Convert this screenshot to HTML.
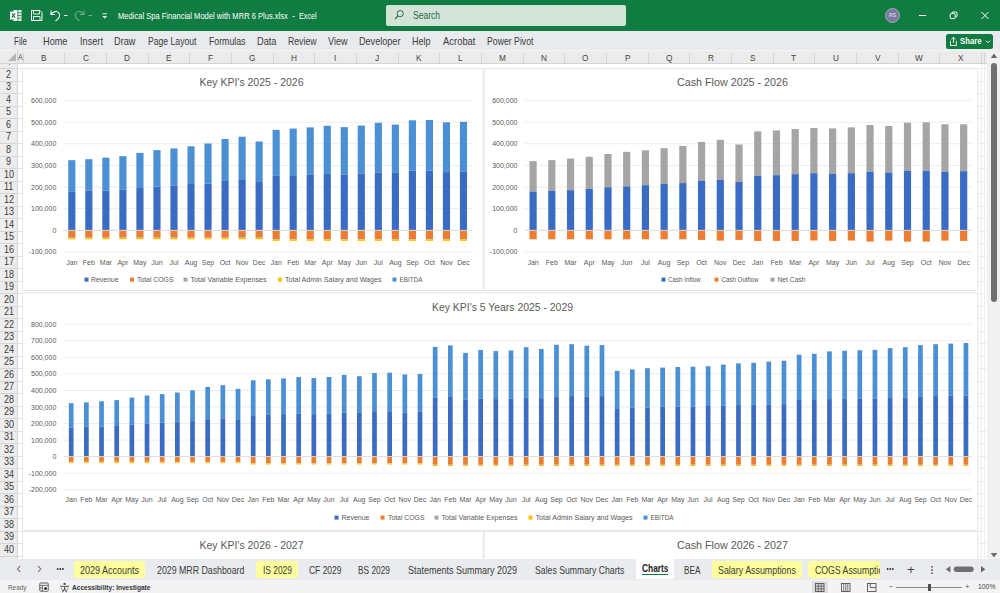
<!DOCTYPE html>
<html><head><meta charset="utf-8"><title>Excel</title>
<style>
html,body{margin:0;padding:0;}
body{width:1000px;height:593px;position:relative;overflow:hidden;background:#fff;font-family:"Liberation Sans",sans-serif;}
.b{position:absolute;display:block;}
.t{position:absolute;white-space:nowrap;line-height:1.16;transform-origin:0 50%;}
</style></head><body>
<div class="b" style="left:0px;top:0px;width:1000px;height:30.7px;background:#107c41;"></div>
<div class="b" style="left:385.5px;top:5px;width:240px;height:20.5px;background:#d2e3d8;border-radius:2px;"></div>
<span class="t" style="left:412.5px;top:9.9px;font-size:10.4px;color:#2b6a47;transform:scaleX(0.819);">Search</span>
<span class="t" style="left:117.5px;top:11.0px;font-size:8.8px;color:#fff;transform:scaleX(0.860);">Medical Spa Financial Model with MRR 6 Plus.xlsx</span>
<span class="t" style="left:291.5px;top:11.0px;font-size:8.8px;color:#fff;transform:scaleX(1.024);">-</span>
<span class="t" style="left:299.3px;top:11.0px;font-size:8.8px;color:#fff;transform:scaleX(0.823);">Excel</span>
<div class="b" style="left:884.5px;top:7.5px;width:15px;height:15px;border-radius:50%;background:#7d77a5;border:1px solid #8fb5a3;box-sizing:border-box"></div>
<span class="t" style="left:888.5px;top:12.2px;font-size:5.2px;color:#e9e6f2;transform:scaleX(0.969);">RS</span>
<div class="b" style="left:0px;top:30.7px;width:1000px;height:19.3px;background:#e8eaed;"></div>
<span class="t" style="left:14.0px;top:35.7px;font-size:10.4px;color:#3b3b3b;transform:scaleX(0.776);">File</span>
<span class="t" style="left:43.0px;top:35.7px;font-size:10.4px;color:#3b3b3b;transform:scaleX(0.883);">Home</span>
<span class="t" style="left:80.0px;top:35.7px;font-size:10.4px;color:#3b3b3b;transform:scaleX(0.884);">Insert</span>
<span class="t" style="left:114.0px;top:35.7px;font-size:10.4px;color:#3b3b3b;transform:scaleX(0.886);">Draw</span>
<span class="t" style="left:148.0px;top:35.7px;font-size:10.4px;color:#3b3b3b;transform:scaleX(0.830);">Page Layout</span>
<span class="t" style="left:209.0px;top:35.7px;font-size:10.4px;color:#3b3b3b;transform:scaleX(0.842);">Formulas</span>
<span class="t" style="left:257.0px;top:35.7px;font-size:10.4px;color:#3b3b3b;transform:scaleX(0.888);">Data</span>
<span class="t" style="left:288.0px;top:35.7px;font-size:10.4px;color:#3b3b3b;transform:scaleX(0.836);">Review</span>
<span class="t" style="left:328.0px;top:35.7px;font-size:10.4px;color:#3b3b3b;transform:scaleX(0.872);">View</span>
<span class="t" style="left:359.0px;top:35.7px;font-size:10.4px;color:#3b3b3b;transform:scaleX(0.875);">Developer</span>
<span class="t" style="left:412.0px;top:35.7px;font-size:10.4px;color:#3b3b3b;transform:scaleX(0.865);">Help</span>
<span class="t" style="left:443.0px;top:35.7px;font-size:10.4px;color:#3b3b3b;transform:scaleX(0.907);">Acrobat</span>
<span class="t" style="left:487.0px;top:35.7px;font-size:10.4px;color:#3b3b3b;transform:scaleX(0.838);">Power Pivot</span>
<div class="b" style="left:946px;top:33.5px;width:46.5px;height:15px;background:#107c41;border-radius:2.5px;"></div>
<span class="t" style="left:960.3px;top:36.1px;font-size:9.0px;color:#fff;font-weight:bold;transform:scaleX(0.860);">Share</span>
<div class="b" style="left:0px;top:50px;width:1000px;height:13.5px;background:#ebebeb;"></div>
<div class="b" style="left:0px;top:49.6px;width:1000px;height:0.9px;background:#f4f4f4;"></div>
<div class="b" style="left:0px;top:63px;width:987px;height:0.9px;background:#d4d4d4;"></div>
<div class="b" style="left:17.3px;top:50px;width:0.8px;height:14px;background:#d4d4d4;"></div>
<div class="b" style="left:22.6px;top:53px;width:0.8px;height:10px;background:#d6d6d6;"></div>
<span class="t" style="left:18.3px;top:51.4px;font-size:9.6px;color:#444;transform:scaleX(0.734);">A</span>
<span class="t" style="left:41.1px;top:51.5px;font-size:9.6px;color:#444;transform:scaleX(0.860);">B</span>
<div class="b" style="left:64.3px;top:53px;width:0.8px;height:10px;background:#d6d6d6;"></div>
<span class="t" style="left:82.5px;top:51.5px;font-size:9.6px;color:#444;transform:scaleX(0.860);">C</span>
<div class="b" style="left:105.89999999999999px;top:53px;width:0.8px;height:10px;background:#d6d6d6;"></div>
<span class="t" style="left:124.2px;top:51.5px;font-size:9.6px;color:#444;transform:scaleX(0.860);">D</span>
<div class="b" style="left:147.6px;top:53px;width:0.8px;height:10px;background:#d6d6d6;"></div>
<span class="t" style="left:166.1px;top:51.5px;font-size:9.6px;color:#444;transform:scaleX(0.860);">E</span>
<div class="b" style="left:189.29999999999998px;top:53px;width:0.8px;height:10px;background:#d6d6d6;"></div>
<span class="t" style="left:208.0px;top:51.5px;font-size:9.6px;color:#444;transform:scaleX(0.860);">F</span>
<div class="b" style="left:231.0px;top:53px;width:0.8px;height:10px;background:#d6d6d6;"></div>
<span class="t" style="left:249.0px;top:51.5px;font-size:9.6px;color:#444;transform:scaleX(0.860);">G</span>
<div class="b" style="left:272.6px;top:53px;width:0.8px;height:10px;background:#d6d6d6;"></div>
<span class="t" style="left:290.9px;top:51.5px;font-size:9.6px;color:#444;transform:scaleX(0.860);">H</span>
<div class="b" style="left:314.3px;top:53px;width:0.8px;height:10px;background:#d6d6d6;"></div>
<span class="t" style="left:334.4px;top:51.5px;font-size:9.6px;color:#444;transform:scaleX(0.860);">I</span>
<div class="b" style="left:356.0px;top:53px;width:0.8px;height:10px;background:#d6d6d6;"></div>
<span class="t" style="left:375.1px;top:51.5px;font-size:9.6px;color:#444;transform:scaleX(0.860);">J</span>
<div class="b" style="left:397.6px;top:53px;width:0.8px;height:10px;background:#d6d6d6;"></div>
<span class="t" style="left:416.1px;top:51.5px;font-size:9.6px;color:#444;transform:scaleX(0.860);">K</span>
<div class="b" style="left:439.3px;top:53px;width:0.8px;height:10px;background:#d6d6d6;"></div>
<span class="t" style="left:458.2px;top:51.5px;font-size:9.6px;color:#444;transform:scaleX(0.860);">L</span>
<div class="b" style="left:481.0px;top:53px;width:0.8px;height:10px;background:#d6d6d6;"></div>
<span class="t" style="left:498.8px;top:51.5px;font-size:9.6px;color:#444;transform:scaleX(0.860);">M</span>
<div class="b" style="left:522.6px;top:53px;width:0.8px;height:10px;background:#d6d6d6;"></div>
<span class="t" style="left:540.9px;top:51.5px;font-size:9.6px;color:#444;transform:scaleX(0.860);">N</span>
<div class="b" style="left:564.3000000000001px;top:53px;width:0.8px;height:10px;background:#d6d6d6;"></div>
<span class="t" style="left:582.3px;top:51.5px;font-size:9.6px;color:#444;transform:scaleX(0.860);">O</span>
<div class="b" style="left:606.0px;top:53px;width:0.8px;height:10px;background:#d6d6d6;"></div>
<span class="t" style="left:624.5px;top:51.5px;font-size:9.6px;color:#444;transform:scaleX(0.860);">P</span>
<div class="b" style="left:647.7px;top:53px;width:0.8px;height:10px;background:#d6d6d6;"></div>
<span class="t" style="left:665.7px;top:51.5px;font-size:9.6px;color:#444;transform:scaleX(0.860);">Q</span>
<div class="b" style="left:689.3000000000001px;top:53px;width:0.8px;height:10px;background:#d6d6d6;"></div>
<span class="t" style="left:707.6px;top:51.5px;font-size:9.6px;color:#444;transform:scaleX(0.860);">R</span>
<div class="b" style="left:731.0px;top:53px;width:0.8px;height:10px;background:#d6d6d6;"></div>
<span class="t" style="left:749.5px;top:51.5px;font-size:9.6px;color:#444;transform:scaleX(0.860);">S</span>
<div class="b" style="left:772.7px;top:53px;width:0.8px;height:10px;background:#d6d6d6;"></div>
<span class="t" style="left:791.4px;top:51.5px;font-size:9.6px;color:#444;transform:scaleX(0.860);">T</span>
<div class="b" style="left:814.3000000000001px;top:53px;width:0.8px;height:10px;background:#d6d6d6;"></div>
<span class="t" style="left:832.6px;top:51.5px;font-size:9.6px;color:#444;transform:scaleX(0.860);">U</span>
<div class="b" style="left:856.0px;top:53px;width:0.8px;height:10px;background:#d6d6d6;"></div>
<span class="t" style="left:874.5px;top:51.5px;font-size:9.6px;color:#444;transform:scaleX(0.860);">V</span>
<div class="b" style="left:897.7px;top:53px;width:0.8px;height:10px;background:#d6d6d6;"></div>
<span class="t" style="left:915.0px;top:51.5px;font-size:9.6px;color:#444;transform:scaleX(0.860);">W</span>
<div class="b" style="left:939.3000000000001px;top:53px;width:0.8px;height:10px;background:#d6d6d6;"></div>
<span class="t" style="left:957.8px;top:51.5px;font-size:9.6px;color:#444;transform:scaleX(0.860);">X</span>
<div class="b" style="left:981.0px;top:53px;width:0.8px;height:10px;background:#d6d6d6;"></div>
<div class="b" style="left:984.2px;top:53px;width:0.8px;height:10px;background:#d6d6d6;"></div>
<svg class="b" style="left:7px;top:53px" width="10" height="9"><path d="M9 0 L9 8 L1 8 Z" fill="#b5b5b5"/></svg>
<div class="b" style="left:0px;top:64px;width:987px;height:495px;background:#fff;"></div>
<div class="b" style="left:0px;top:64px;width:17.5px;height:495px;background:#ededed;"></div>
<div class="b" style="left:17.3px;top:64px;width:0.8px;height:495px;background:#d4d4d4;"></div>
<div class="b" style="left:8.7px;top:64px;width:1.2px;height:1.2px;background:#8a8a8a;"></div>
<div class="b" style="left:0px;top:68.0px;width:17.5px;height:0.8px;background:#d6d6d6;"></div>
<span class="t" style="left:6.4px;top:68.8px;font-size:10.3px;color:#3c3c3c;transform:scaleX(0.880);">2</span>
<div class="b" style="left:0px;top:80.5px;width:17.5px;height:0.8px;background:#d6d6d6;"></div>
<span class="t" style="left:6.4px;top:81.3px;font-size:10.3px;color:#3c3c3c;transform:scaleX(0.880);">3</span>
<div class="b" style="left:0px;top:93.0px;width:17.5px;height:0.8px;background:#d6d6d6;"></div>
<span class="t" style="left:6.4px;top:93.8px;font-size:10.3px;color:#3c3c3c;transform:scaleX(0.880);">4</span>
<div class="b" style="left:0px;top:105.5px;width:17.5px;height:0.8px;background:#d6d6d6;"></div>
<span class="t" style="left:6.4px;top:106.3px;font-size:10.3px;color:#3c3c3c;transform:scaleX(0.880);">5</span>
<div class="b" style="left:0px;top:118.0px;width:17.5px;height:0.8px;background:#d6d6d6;"></div>
<span class="t" style="left:6.4px;top:118.8px;font-size:10.3px;color:#3c3c3c;transform:scaleX(0.880);">6</span>
<div class="b" style="left:0px;top:130.5px;width:17.5px;height:0.8px;background:#d6d6d6;"></div>
<span class="t" style="left:6.4px;top:131.3px;font-size:10.3px;color:#3c3c3c;transform:scaleX(0.880);">7</span>
<div class="b" style="left:0px;top:143.0px;width:17.5px;height:0.8px;background:#d6d6d6;"></div>
<span class="t" style="left:6.4px;top:143.8px;font-size:10.3px;color:#3c3c3c;transform:scaleX(0.880);">8</span>
<div class="b" style="left:0px;top:155.5px;width:17.5px;height:0.8px;background:#d6d6d6;"></div>
<span class="t" style="left:6.4px;top:156.3px;font-size:10.3px;color:#3c3c3c;transform:scaleX(0.880);">9</span>
<div class="b" style="left:0px;top:168.0px;width:17.5px;height:0.8px;background:#d6d6d6;"></div>
<span class="t" style="left:3.9px;top:168.8px;font-size:10.3px;color:#3c3c3c;transform:scaleX(0.880);">10</span>
<div class="b" style="left:0px;top:180.5px;width:17.5px;height:0.8px;background:#d6d6d6;"></div>
<span class="t" style="left:4.2px;top:181.3px;font-size:10.3px;color:#3c3c3c;transform:scaleX(0.880);">11</span>
<div class="b" style="left:0px;top:193.0px;width:17.5px;height:0.8px;background:#d6d6d6;"></div>
<span class="t" style="left:3.9px;top:193.8px;font-size:10.3px;color:#3c3c3c;transform:scaleX(0.880);">12</span>
<div class="b" style="left:0px;top:205.5px;width:17.5px;height:0.8px;background:#d6d6d6;"></div>
<span class="t" style="left:3.9px;top:206.3px;font-size:10.3px;color:#3c3c3c;transform:scaleX(0.880);">13</span>
<div class="b" style="left:0px;top:218.0px;width:17.5px;height:0.8px;background:#d6d6d6;"></div>
<span class="t" style="left:3.9px;top:218.8px;font-size:10.3px;color:#3c3c3c;transform:scaleX(0.880);">14</span>
<div class="b" style="left:0px;top:230.5px;width:17.5px;height:0.8px;background:#d6d6d6;"></div>
<span class="t" style="left:3.9px;top:231.3px;font-size:10.3px;color:#3c3c3c;transform:scaleX(0.880);">15</span>
<div class="b" style="left:0px;top:243.0px;width:17.5px;height:0.8px;background:#d6d6d6;"></div>
<span class="t" style="left:3.9px;top:243.8px;font-size:10.3px;color:#3c3c3c;transform:scaleX(0.880);">16</span>
<div class="b" style="left:0px;top:255.5px;width:17.5px;height:0.8px;background:#d6d6d6;"></div>
<span class="t" style="left:3.9px;top:256.3px;font-size:10.3px;color:#3c3c3c;transform:scaleX(0.880);">17</span>
<div class="b" style="left:0px;top:268.0px;width:17.5px;height:0.8px;background:#d6d6d6;"></div>
<span class="t" style="left:3.9px;top:268.8px;font-size:10.3px;color:#3c3c3c;transform:scaleX(0.880);">18</span>
<div class="b" style="left:0px;top:280.5px;width:17.5px;height:0.8px;background:#d6d6d6;"></div>
<span class="t" style="left:3.9px;top:281.3px;font-size:10.3px;color:#3c3c3c;transform:scaleX(0.880);">19</span>
<div class="b" style="left:0px;top:293.0px;width:17.5px;height:0.8px;background:#d6d6d6;"></div>
<span class="t" style="left:3.9px;top:293.8px;font-size:10.3px;color:#3c3c3c;transform:scaleX(0.880);">20</span>
<div class="b" style="left:0px;top:305.5px;width:17.5px;height:0.8px;background:#d6d6d6;"></div>
<span class="t" style="left:3.9px;top:306.3px;font-size:10.3px;color:#3c3c3c;transform:scaleX(0.880);">21</span>
<div class="b" style="left:0px;top:318.0px;width:17.5px;height:0.8px;background:#d6d6d6;"></div>
<span class="t" style="left:3.9px;top:318.8px;font-size:10.3px;color:#3c3c3c;transform:scaleX(0.880);">22</span>
<div class="b" style="left:0px;top:330.5px;width:17.5px;height:0.8px;background:#d6d6d6;"></div>
<span class="t" style="left:3.9px;top:331.3px;font-size:10.3px;color:#3c3c3c;transform:scaleX(0.880);">23</span>
<div class="b" style="left:0px;top:343.0px;width:17.5px;height:0.8px;background:#d6d6d6;"></div>
<span class="t" style="left:3.9px;top:343.8px;font-size:10.3px;color:#3c3c3c;transform:scaleX(0.880);">24</span>
<div class="b" style="left:0px;top:355.5px;width:17.5px;height:0.8px;background:#d6d6d6;"></div>
<span class="t" style="left:3.9px;top:356.3px;font-size:10.3px;color:#3c3c3c;transform:scaleX(0.880);">25</span>
<div class="b" style="left:0px;top:368.0px;width:17.5px;height:0.8px;background:#d6d6d6;"></div>
<span class="t" style="left:3.9px;top:368.8px;font-size:10.3px;color:#3c3c3c;transform:scaleX(0.880);">26</span>
<div class="b" style="left:0px;top:380.5px;width:17.5px;height:0.8px;background:#d6d6d6;"></div>
<span class="t" style="left:3.9px;top:381.3px;font-size:10.3px;color:#3c3c3c;transform:scaleX(0.880);">27</span>
<div class="b" style="left:0px;top:393.0px;width:17.5px;height:0.8px;background:#d6d6d6;"></div>
<span class="t" style="left:3.9px;top:393.8px;font-size:10.3px;color:#3c3c3c;transform:scaleX(0.880);">28</span>
<div class="b" style="left:0px;top:405.5px;width:17.5px;height:0.8px;background:#d6d6d6;"></div>
<span class="t" style="left:3.9px;top:406.3px;font-size:10.3px;color:#3c3c3c;transform:scaleX(0.880);">29</span>
<div class="b" style="left:0px;top:418.0px;width:17.5px;height:0.8px;background:#d6d6d6;"></div>
<span class="t" style="left:3.9px;top:418.8px;font-size:10.3px;color:#3c3c3c;transform:scaleX(0.880);">30</span>
<div class="b" style="left:0px;top:430.5px;width:17.5px;height:0.8px;background:#d6d6d6;"></div>
<span class="t" style="left:3.9px;top:431.3px;font-size:10.3px;color:#3c3c3c;transform:scaleX(0.880);">31</span>
<div class="b" style="left:0px;top:443.0px;width:17.5px;height:0.8px;background:#d6d6d6;"></div>
<span class="t" style="left:3.9px;top:443.8px;font-size:10.3px;color:#3c3c3c;transform:scaleX(0.880);">32</span>
<div class="b" style="left:0px;top:455.5px;width:17.5px;height:0.8px;background:#d6d6d6;"></div>
<span class="t" style="left:3.9px;top:456.3px;font-size:10.3px;color:#3c3c3c;transform:scaleX(0.880);">33</span>
<div class="b" style="left:0px;top:468.0px;width:17.5px;height:0.8px;background:#d6d6d6;"></div>
<span class="t" style="left:3.9px;top:468.8px;font-size:10.3px;color:#3c3c3c;transform:scaleX(0.880);">34</span>
<div class="b" style="left:0px;top:480.5px;width:17.5px;height:0.8px;background:#d6d6d6;"></div>
<span class="t" style="left:3.9px;top:481.3px;font-size:10.3px;color:#3c3c3c;transform:scaleX(0.880);">35</span>
<div class="b" style="left:0px;top:493.0px;width:17.5px;height:0.8px;background:#d6d6d6;"></div>
<span class="t" style="left:3.9px;top:493.8px;font-size:10.3px;color:#3c3c3c;transform:scaleX(0.880);">36</span>
<div class="b" style="left:0px;top:505.5px;width:17.5px;height:0.8px;background:#d6d6d6;"></div>
<span class="t" style="left:3.9px;top:506.3px;font-size:10.3px;color:#3c3c3c;transform:scaleX(0.880);">37</span>
<div class="b" style="left:0px;top:518.0px;width:17.5px;height:0.8px;background:#d6d6d6;"></div>
<span class="t" style="left:3.9px;top:518.8px;font-size:10.3px;color:#3c3c3c;transform:scaleX(0.880);">38</span>
<div class="b" style="left:0px;top:530.5px;width:17.5px;height:0.8px;background:#d6d6d6;"></div>
<span class="t" style="left:3.9px;top:531.3px;font-size:10.3px;color:#3c3c3c;transform:scaleX(0.880);">39</span>
<div class="b" style="left:0px;top:543.0px;width:17.5px;height:0.8px;background:#d6d6d6;"></div>
<span class="t" style="left:3.9px;top:543.8px;font-size:10.3px;color:#3c3c3c;transform:scaleX(0.880);">40</span>
<div class="b" style="left:0px;top:555.5px;width:17.5px;height:0.8px;background:#d6d6d6;"></div>
<div class="b" style="left:18px;top:68.0px;width:5px;height:0.7px;background:#e4e4e4;"></div>
<div class="b" style="left:978.5px;top:68.0px;width:8.5px;height:0.7px;background:#eeeeee;"></div>
<div class="b" style="left:18px;top:80.5px;width:5px;height:0.7px;background:#e4e4e4;"></div>
<div class="b" style="left:978.5px;top:80.5px;width:8.5px;height:0.7px;background:#eeeeee;"></div>
<div class="b" style="left:18px;top:93.0px;width:5px;height:0.7px;background:#e4e4e4;"></div>
<div class="b" style="left:978.5px;top:93.0px;width:8.5px;height:0.7px;background:#eeeeee;"></div>
<div class="b" style="left:18px;top:105.5px;width:5px;height:0.7px;background:#e4e4e4;"></div>
<div class="b" style="left:978.5px;top:105.5px;width:8.5px;height:0.7px;background:#eeeeee;"></div>
<div class="b" style="left:18px;top:118.0px;width:5px;height:0.7px;background:#e4e4e4;"></div>
<div class="b" style="left:978.5px;top:118.0px;width:8.5px;height:0.7px;background:#eeeeee;"></div>
<div class="b" style="left:18px;top:130.5px;width:5px;height:0.7px;background:#e4e4e4;"></div>
<div class="b" style="left:978.5px;top:130.5px;width:8.5px;height:0.7px;background:#eeeeee;"></div>
<div class="b" style="left:18px;top:143.0px;width:5px;height:0.7px;background:#e4e4e4;"></div>
<div class="b" style="left:978.5px;top:143.0px;width:8.5px;height:0.7px;background:#eeeeee;"></div>
<div class="b" style="left:18px;top:155.5px;width:5px;height:0.7px;background:#e4e4e4;"></div>
<div class="b" style="left:978.5px;top:155.5px;width:8.5px;height:0.7px;background:#eeeeee;"></div>
<div class="b" style="left:18px;top:168.0px;width:5px;height:0.7px;background:#e4e4e4;"></div>
<div class="b" style="left:978.5px;top:168.0px;width:8.5px;height:0.7px;background:#eeeeee;"></div>
<div class="b" style="left:18px;top:180.5px;width:5px;height:0.7px;background:#e4e4e4;"></div>
<div class="b" style="left:978.5px;top:180.5px;width:8.5px;height:0.7px;background:#eeeeee;"></div>
<div class="b" style="left:18px;top:193.0px;width:5px;height:0.7px;background:#e4e4e4;"></div>
<div class="b" style="left:978.5px;top:193.0px;width:8.5px;height:0.7px;background:#eeeeee;"></div>
<div class="b" style="left:18px;top:205.5px;width:5px;height:0.7px;background:#e4e4e4;"></div>
<div class="b" style="left:978.5px;top:205.5px;width:8.5px;height:0.7px;background:#eeeeee;"></div>
<div class="b" style="left:18px;top:218.0px;width:5px;height:0.7px;background:#e4e4e4;"></div>
<div class="b" style="left:978.5px;top:218.0px;width:8.5px;height:0.7px;background:#eeeeee;"></div>
<div class="b" style="left:18px;top:230.5px;width:5px;height:0.7px;background:#e4e4e4;"></div>
<div class="b" style="left:978.5px;top:230.5px;width:8.5px;height:0.7px;background:#eeeeee;"></div>
<div class="b" style="left:18px;top:243.0px;width:5px;height:0.7px;background:#e4e4e4;"></div>
<div class="b" style="left:978.5px;top:243.0px;width:8.5px;height:0.7px;background:#eeeeee;"></div>
<div class="b" style="left:18px;top:255.5px;width:5px;height:0.7px;background:#e4e4e4;"></div>
<div class="b" style="left:978.5px;top:255.5px;width:8.5px;height:0.7px;background:#eeeeee;"></div>
<div class="b" style="left:18px;top:268.0px;width:5px;height:0.7px;background:#e4e4e4;"></div>
<div class="b" style="left:978.5px;top:268.0px;width:8.5px;height:0.7px;background:#eeeeee;"></div>
<div class="b" style="left:18px;top:280.5px;width:5px;height:0.7px;background:#e4e4e4;"></div>
<div class="b" style="left:978.5px;top:280.5px;width:8.5px;height:0.7px;background:#eeeeee;"></div>
<div class="b" style="left:18px;top:293.0px;width:5px;height:0.7px;background:#e4e4e4;"></div>
<div class="b" style="left:978.5px;top:293.0px;width:8.5px;height:0.7px;background:#eeeeee;"></div>
<div class="b" style="left:18px;top:305.5px;width:5px;height:0.7px;background:#e4e4e4;"></div>
<div class="b" style="left:978.5px;top:305.5px;width:8.5px;height:0.7px;background:#eeeeee;"></div>
<div class="b" style="left:18px;top:318.0px;width:5px;height:0.7px;background:#e4e4e4;"></div>
<div class="b" style="left:978.5px;top:318.0px;width:8.5px;height:0.7px;background:#eeeeee;"></div>
<div class="b" style="left:18px;top:330.5px;width:5px;height:0.7px;background:#e4e4e4;"></div>
<div class="b" style="left:978.5px;top:330.5px;width:8.5px;height:0.7px;background:#eeeeee;"></div>
<div class="b" style="left:18px;top:343.0px;width:5px;height:0.7px;background:#e4e4e4;"></div>
<div class="b" style="left:978.5px;top:343.0px;width:8.5px;height:0.7px;background:#eeeeee;"></div>
<div class="b" style="left:18px;top:355.5px;width:5px;height:0.7px;background:#e4e4e4;"></div>
<div class="b" style="left:978.5px;top:355.5px;width:8.5px;height:0.7px;background:#eeeeee;"></div>
<div class="b" style="left:18px;top:368.0px;width:5px;height:0.7px;background:#e4e4e4;"></div>
<div class="b" style="left:978.5px;top:368.0px;width:8.5px;height:0.7px;background:#eeeeee;"></div>
<div class="b" style="left:18px;top:380.5px;width:5px;height:0.7px;background:#e4e4e4;"></div>
<div class="b" style="left:978.5px;top:380.5px;width:8.5px;height:0.7px;background:#eeeeee;"></div>
<div class="b" style="left:18px;top:393.0px;width:5px;height:0.7px;background:#e4e4e4;"></div>
<div class="b" style="left:978.5px;top:393.0px;width:8.5px;height:0.7px;background:#eeeeee;"></div>
<div class="b" style="left:18px;top:405.5px;width:5px;height:0.7px;background:#e4e4e4;"></div>
<div class="b" style="left:978.5px;top:405.5px;width:8.5px;height:0.7px;background:#eeeeee;"></div>
<div class="b" style="left:18px;top:418.0px;width:5px;height:0.7px;background:#e4e4e4;"></div>
<div class="b" style="left:978.5px;top:418.0px;width:8.5px;height:0.7px;background:#eeeeee;"></div>
<div class="b" style="left:18px;top:430.5px;width:5px;height:0.7px;background:#e4e4e4;"></div>
<div class="b" style="left:978.5px;top:430.5px;width:8.5px;height:0.7px;background:#eeeeee;"></div>
<div class="b" style="left:18px;top:443.0px;width:5px;height:0.7px;background:#e4e4e4;"></div>
<div class="b" style="left:978.5px;top:443.0px;width:8.5px;height:0.7px;background:#eeeeee;"></div>
<div class="b" style="left:18px;top:455.5px;width:5px;height:0.7px;background:#e4e4e4;"></div>
<div class="b" style="left:978.5px;top:455.5px;width:8.5px;height:0.7px;background:#eeeeee;"></div>
<div class="b" style="left:18px;top:468.0px;width:5px;height:0.7px;background:#e4e4e4;"></div>
<div class="b" style="left:978.5px;top:468.0px;width:8.5px;height:0.7px;background:#eeeeee;"></div>
<div class="b" style="left:18px;top:480.5px;width:5px;height:0.7px;background:#e4e4e4;"></div>
<div class="b" style="left:978.5px;top:480.5px;width:8.5px;height:0.7px;background:#eeeeee;"></div>
<div class="b" style="left:18px;top:493.0px;width:5px;height:0.7px;background:#e4e4e4;"></div>
<div class="b" style="left:978.5px;top:493.0px;width:8.5px;height:0.7px;background:#eeeeee;"></div>
<div class="b" style="left:18px;top:505.5px;width:5px;height:0.7px;background:#e4e4e4;"></div>
<div class="b" style="left:978.5px;top:505.5px;width:8.5px;height:0.7px;background:#eeeeee;"></div>
<div class="b" style="left:18px;top:518.0px;width:5px;height:0.7px;background:#e4e4e4;"></div>
<div class="b" style="left:978.5px;top:518.0px;width:8.5px;height:0.7px;background:#eeeeee;"></div>
<div class="b" style="left:18px;top:530.5px;width:5px;height:0.7px;background:#e4e4e4;"></div>
<div class="b" style="left:978.5px;top:530.5px;width:8.5px;height:0.7px;background:#eeeeee;"></div>
<div class="b" style="left:18px;top:543.0px;width:5px;height:0.7px;background:#e4e4e4;"></div>
<div class="b" style="left:978.5px;top:543.0px;width:8.5px;height:0.7px;background:#eeeeee;"></div>
<div class="b" style="left:18px;top:555.5px;width:5px;height:0.7px;background:#e4e4e4;"></div>
<div class="b" style="left:978.5px;top:555.5px;width:8.5px;height:0.7px;background:#eeeeee;"></div>
<svg class="b" style="left:0;top:0" width="1000" height="559" viewBox="0 0 1000 559" font-family="'Liberation Sans',sans-serif"><rect x="22.60" y="68.40" width="460.50" height="222.00" fill="#fff" stroke="#e3e3e3" stroke-width="0.9"/><text x="251.5" y="86.2" font-size="11.3" text-anchor="middle" fill="#595959" textLength="104.0" lengthAdjust="spacingAndGlyphs">Key KPI's 2025 - 2026</text><rect x="63.30" y="100.12" width="408.70" height="0.80" fill="#e9e9e9" /><text x="56.3" y="103.0" font-size="7.0" text-anchor="end" fill="#595959">600,000</text><rect x="63.30" y="121.75" width="408.70" height="0.80" fill="#e9e9e9" /><text x="56.3" y="124.7" font-size="7.0" text-anchor="end" fill="#595959">500,000</text><rect x="63.30" y="143.38" width="408.70" height="0.80" fill="#e9e9e9" /><text x="56.3" y="146.3" font-size="7.0" text-anchor="end" fill="#595959">400,000</text><rect x="63.30" y="165.01" width="408.70" height="0.80" fill="#e9e9e9" /><text x="56.3" y="167.9" font-size="7.0" text-anchor="end" fill="#595959">300,000</text><rect x="63.30" y="186.64" width="408.70" height="0.80" fill="#e9e9e9" /><text x="56.3" y="189.5" font-size="7.0" text-anchor="end" fill="#595959">200,000</text><rect x="63.30" y="208.27" width="408.70" height="0.80" fill="#e9e9e9" /><text x="56.3" y="211.2" font-size="7.0" text-anchor="end" fill="#595959">100,000</text><rect x="63.30" y="229.90" width="408.70" height="0.80" fill="#e9e9e9" /><text x="56.3" y="232.8" font-size="7.0" text-anchor="end" fill="#595959">0</text><rect x="63.30" y="251.53" width="408.70" height="0.80" fill="#e9e9e9" /><text x="56.3" y="254.4" font-size="7.0" text-anchor="end" fill="#595959">-100,000</text><rect x="68.24" y="160.20" width="7.15" height="31.60" fill="#4b8fd4" /><rect x="68.24" y="191.80" width="7.15" height="38.50" fill="#3a6cc4" /><rect x="68.24" y="230.30" width="7.15" height="7.20" fill="#ed7d31" /><rect x="68.24" y="237.50" width="7.15" height="0.50" fill="#a5a5a5" /><rect x="68.24" y="238.00" width="7.15" height="1.30" fill="#ffc000" /><text x="71.8" y="265.2" font-size="7.0" text-anchor="middle" fill="#595959">Jan</text><rect x="85.27" y="159.20" width="7.15" height="31.40" fill="#4b8fd4" /><rect x="85.27" y="190.60" width="7.15" height="39.70" fill="#3a6cc4" /><rect x="85.27" y="230.30" width="7.15" height="7.20" fill="#ed7d31" /><rect x="85.27" y="237.50" width="7.15" height="0.50" fill="#a5a5a5" /><rect x="85.27" y="238.00" width="7.15" height="1.30" fill="#ffc000" /><text x="88.8" y="265.2" font-size="7.0" text-anchor="middle" fill="#595959">Feb</text><rect x="102.30" y="157.70" width="7.15" height="32.90" fill="#4b8fd4" /><rect x="102.30" y="190.60" width="7.15" height="39.70" fill="#3a6cc4" /><rect x="102.30" y="230.30" width="7.15" height="7.20" fill="#ed7d31" /><rect x="102.30" y="237.50" width="7.15" height="0.50" fill="#a5a5a5" /><rect x="102.30" y="238.00" width="7.15" height="1.30" fill="#ffc000" /><text x="105.9" y="265.2" font-size="7.0" text-anchor="middle" fill="#595959">Mar</text><rect x="119.33" y="156.20" width="7.15" height="33.60" fill="#4b8fd4" /><rect x="119.33" y="189.80" width="7.15" height="40.50" fill="#3a6cc4" /><rect x="119.33" y="230.30" width="7.15" height="7.20" fill="#ed7d31" /><rect x="119.33" y="237.50" width="7.15" height="0.50" fill="#a5a5a5" /><rect x="119.33" y="238.00" width="7.15" height="1.30" fill="#ffc000" /><text x="122.9" y="265.2" font-size="7.0" text-anchor="middle" fill="#595959">Apr</text><rect x="136.36" y="152.90" width="7.15" height="35.10" fill="#4b8fd4" /><rect x="136.36" y="188.00" width="7.15" height="42.30" fill="#3a6cc4" /><rect x="136.36" y="230.30" width="7.15" height="7.20" fill="#ed7d31" /><rect x="136.36" y="237.50" width="7.15" height="0.50" fill="#a5a5a5" /><rect x="136.36" y="238.00" width="7.15" height="1.30" fill="#ffc000" /><text x="139.9" y="265.2" font-size="7.0" text-anchor="middle" fill="#595959">May</text><rect x="153.39" y="150.10" width="7.15" height="36.40" fill="#4b8fd4" /><rect x="153.39" y="186.50" width="7.15" height="43.80" fill="#3a6cc4" /><rect x="153.39" y="230.30" width="7.15" height="7.20" fill="#ed7d31" /><rect x="153.39" y="237.50" width="7.15" height="0.50" fill="#a5a5a5" /><rect x="153.39" y="238.00" width="7.15" height="1.30" fill="#ffc000" /><text x="157.0" y="265.2" font-size="7.0" text-anchor="middle" fill="#595959">Jun</text><rect x="170.41" y="148.40" width="7.15" height="37.10" fill="#4b8fd4" /><rect x="170.41" y="185.50" width="7.15" height="44.80" fill="#3a6cc4" /><rect x="170.41" y="230.30" width="7.15" height="7.20" fill="#ed7d31" /><rect x="170.41" y="237.50" width="7.15" height="0.50" fill="#a5a5a5" /><rect x="170.41" y="238.00" width="7.15" height="1.30" fill="#ffc000" /><text x="174.0" y="265.2" font-size="7.0" text-anchor="middle" fill="#595959">Jul</text><rect x="187.44" y="146.30" width="7.15" height="37.70" fill="#4b8fd4" /><rect x="187.44" y="184.00" width="7.15" height="46.30" fill="#3a6cc4" /><rect x="187.44" y="230.30" width="7.15" height="7.20" fill="#ed7d31" /><rect x="187.44" y="237.50" width="7.15" height="0.50" fill="#a5a5a5" /><rect x="187.44" y="238.00" width="7.15" height="1.30" fill="#ffc000" /><text x="191.0" y="265.2" font-size="7.0" text-anchor="middle" fill="#595959">Aug</text><rect x="204.47" y="143.50" width="7.15" height="40.00" fill="#4b8fd4" /><rect x="204.47" y="183.50" width="7.15" height="46.80" fill="#3a6cc4" /><rect x="204.47" y="230.30" width="7.15" height="7.20" fill="#ed7d31" /><rect x="204.47" y="237.50" width="7.15" height="0.50" fill="#a5a5a5" /><rect x="204.47" y="238.00" width="7.15" height="1.30" fill="#ffc000" /><text x="208.0" y="265.2" font-size="7.0" text-anchor="middle" fill="#595959">Sep</text><rect x="221.50" y="139.00" width="7.15" height="42.00" fill="#4b8fd4" /><rect x="221.50" y="181.00" width="7.15" height="49.30" fill="#3a6cc4" /><rect x="221.50" y="230.30" width="7.15" height="7.20" fill="#ed7d31" /><rect x="221.50" y="237.50" width="7.15" height="0.50" fill="#a5a5a5" /><rect x="221.50" y="238.00" width="7.15" height="1.30" fill="#ffc000" /><text x="225.1" y="265.2" font-size="7.0" text-anchor="middle" fill="#595959">Oct</text><rect x="238.53" y="136.70" width="7.15" height="43.30" fill="#4b8fd4" /><rect x="238.53" y="180.00" width="7.15" height="50.30" fill="#3a6cc4" /><rect x="238.53" y="230.30" width="7.15" height="7.20" fill="#ed7d31" /><rect x="238.53" y="237.50" width="7.15" height="0.50" fill="#a5a5a5" /><rect x="238.53" y="238.00" width="7.15" height="1.30" fill="#ffc000" /><text x="242.1" y="265.2" font-size="7.0" text-anchor="middle" fill="#595959">Nov</text><rect x="255.56" y="141.50" width="7.15" height="40.50" fill="#4b8fd4" /><rect x="255.56" y="182.00" width="7.15" height="48.30" fill="#3a6cc4" /><rect x="255.56" y="230.30" width="7.15" height="7.20" fill="#ed7d31" /><rect x="255.56" y="237.50" width="7.15" height="0.50" fill="#a5a5a5" /><rect x="255.56" y="238.00" width="7.15" height="1.30" fill="#ffc000" /><text x="259.1" y="265.2" font-size="7.0" text-anchor="middle" fill="#595959">Dec</text><rect x="272.59" y="129.90" width="7.15" height="46.00" fill="#4b8fd4" /><rect x="272.59" y="175.90" width="7.15" height="54.40" fill="#3a6cc4" /><rect x="272.59" y="230.30" width="7.15" height="8.80" fill="#ed7d31" /><rect x="272.59" y="239.10" width="7.15" height="0.50" fill="#a5a5a5" /><rect x="272.59" y="239.60" width="7.15" height="1.30" fill="#ffc000" /><text x="276.2" y="265.2" font-size="7.0" text-anchor="middle" fill="#595959">Jan</text><rect x="289.62" y="128.60" width="7.15" height="46.60" fill="#4b8fd4" /><rect x="289.62" y="175.20" width="7.15" height="55.10" fill="#3a6cc4" /><rect x="289.62" y="230.30" width="7.15" height="8.80" fill="#ed7d31" /><rect x="289.62" y="239.10" width="7.15" height="0.50" fill="#a5a5a5" /><rect x="289.62" y="239.60" width="7.15" height="1.30" fill="#ffc000" /><text x="293.2" y="265.2" font-size="7.0" text-anchor="middle" fill="#595959">Feb</text><rect x="306.65" y="127.40" width="7.15" height="47.00" fill="#4b8fd4" /><rect x="306.65" y="174.40" width="7.15" height="55.90" fill="#3a6cc4" /><rect x="306.65" y="230.30" width="7.15" height="8.80" fill="#ed7d31" /><rect x="306.65" y="239.10" width="7.15" height="0.50" fill="#a5a5a5" /><rect x="306.65" y="239.60" width="7.15" height="1.30" fill="#ffc000" /><text x="310.2" y="265.2" font-size="7.0" text-anchor="middle" fill="#595959">Mar</text><rect x="323.68" y="125.80" width="7.15" height="48.10" fill="#4b8fd4" /><rect x="323.68" y="173.90" width="7.15" height="56.40" fill="#3a6cc4" /><rect x="323.68" y="230.30" width="7.15" height="8.80" fill="#ed7d31" /><rect x="323.68" y="239.10" width="7.15" height="0.50" fill="#a5a5a5" /><rect x="323.68" y="239.60" width="7.15" height="1.30" fill="#ffc000" /><text x="327.3" y="265.2" font-size="7.0" text-anchor="middle" fill="#595959">Apr</text><rect x="340.71" y="127.10" width="7.15" height="47.30" fill="#4b8fd4" /><rect x="340.71" y="174.40" width="7.15" height="55.90" fill="#3a6cc4" /><rect x="340.71" y="230.30" width="7.15" height="8.80" fill="#ed7d31" /><rect x="340.71" y="239.10" width="7.15" height="0.50" fill="#a5a5a5" /><rect x="340.71" y="239.60" width="7.15" height="1.30" fill="#ffc000" /><text x="344.3" y="265.2" font-size="7.0" text-anchor="middle" fill="#595959">May</text><rect x="357.74" y="125.60" width="7.15" height="48.00" fill="#4b8fd4" /><rect x="357.74" y="173.60" width="7.15" height="56.70" fill="#3a6cc4" /><rect x="357.74" y="230.30" width="7.15" height="8.80" fill="#ed7d31" /><rect x="357.74" y="239.10" width="7.15" height="0.50" fill="#a5a5a5" /><rect x="357.74" y="239.60" width="7.15" height="1.30" fill="#ffc000" /><text x="361.3" y="265.2" font-size="7.0" text-anchor="middle" fill="#595959">Jun</text><rect x="374.76" y="122.80" width="7.15" height="49.60" fill="#4b8fd4" /><rect x="374.76" y="172.40" width="7.15" height="57.90" fill="#3a6cc4" /><rect x="374.76" y="230.30" width="7.15" height="8.80" fill="#ed7d31" /><rect x="374.76" y="239.10" width="7.15" height="0.50" fill="#a5a5a5" /><rect x="374.76" y="239.60" width="7.15" height="1.30" fill="#ffc000" /><text x="378.3" y="265.2" font-size="7.0" text-anchor="middle" fill="#595959">Jul</text><rect x="391.79" y="124.60" width="7.15" height="48.30" fill="#4b8fd4" /><rect x="391.79" y="172.90" width="7.15" height="57.40" fill="#3a6cc4" /><rect x="391.79" y="230.30" width="7.15" height="8.80" fill="#ed7d31" /><rect x="391.79" y="239.10" width="7.15" height="0.50" fill="#a5a5a5" /><rect x="391.79" y="239.60" width="7.15" height="1.30" fill="#ffc000" /><text x="395.4" y="265.2" font-size="7.0" text-anchor="middle" fill="#595959">Aug</text><rect x="408.82" y="120.30" width="7.15" height="50.30" fill="#4b8fd4" /><rect x="408.82" y="170.60" width="7.15" height="59.70" fill="#3a6cc4" /><rect x="408.82" y="230.30" width="7.15" height="8.80" fill="#ed7d31" /><rect x="408.82" y="239.10" width="7.15" height="0.50" fill="#a5a5a5" /><rect x="408.82" y="239.60" width="7.15" height="1.30" fill="#ffc000" /><text x="412.4" y="265.2" font-size="7.0" text-anchor="middle" fill="#595959">Sep</text><rect x="425.85" y="120.00" width="7.15" height="50.60" fill="#4b8fd4" /><rect x="425.85" y="170.60" width="7.15" height="59.70" fill="#3a6cc4" /><rect x="425.85" y="230.30" width="7.15" height="8.80" fill="#ed7d31" /><rect x="425.85" y="239.10" width="7.15" height="0.50" fill="#a5a5a5" /><rect x="425.85" y="239.60" width="7.15" height="1.30" fill="#ffc000" /><text x="429.4" y="265.2" font-size="7.0" text-anchor="middle" fill="#595959">Oct</text><rect x="442.88" y="122.30" width="7.15" height="49.80" fill="#4b8fd4" /><rect x="442.88" y="172.10" width="7.15" height="58.20" fill="#3a6cc4" /><rect x="442.88" y="230.30" width="7.15" height="8.80" fill="#ed7d31" /><rect x="442.88" y="239.10" width="7.15" height="0.50" fill="#a5a5a5" /><rect x="442.88" y="239.60" width="7.15" height="1.30" fill="#ffc000" /><text x="446.5" y="265.2" font-size="7.0" text-anchor="middle" fill="#595959">Nov</text><rect x="459.91" y="121.80" width="7.15" height="49.60" fill="#4b8fd4" /><rect x="459.91" y="171.40" width="7.15" height="58.90" fill="#3a6cc4" /><rect x="459.91" y="230.30" width="7.15" height="8.80" fill="#ed7d31" /><rect x="459.91" y="239.10" width="7.15" height="0.50" fill="#a5a5a5" /><rect x="459.91" y="239.60" width="7.15" height="1.30" fill="#ffc000" /><text x="463.5" y="265.2" font-size="7.0" text-anchor="middle" fill="#595959">Dec</text><rect x="63.30" y="229.85" width="408.70" height="0.90" fill="#dcdcdc" /><rect x="84.50" y="277.60" width="4.00" height="4.00" fill="#3a6cc4" /><text x="91.0" y="282.1" font-size="7.0" text-anchor="start" fill="#595959" textLength="27.5" lengthAdjust="spacingAndGlyphs">Revenue</text><rect x="130.00" y="277.60" width="4.00" height="4.00" fill="#ed7d31" /><text x="137.0" y="282.1" font-size="7.0" text-anchor="start" fill="#595959" textLength="36.5" lengthAdjust="spacingAndGlyphs">Total COGS</text><rect x="183.50" y="277.60" width="4.00" height="4.00" fill="#a5a5a5" /><text x="190.5" y="282.1" font-size="7.0" text-anchor="start" fill="#595959" textLength="76.0" lengthAdjust="spacingAndGlyphs">Total Variable Expenses</text><rect x="278.00" y="277.60" width="4.00" height="4.00" fill="#ffc000" /><text x="285.0" y="282.1" font-size="7.0" text-anchor="start" fill="#595959" textLength="96.5" lengthAdjust="spacingAndGlyphs">Total Admin Salary and Wages</text><rect x="392.50" y="277.60" width="4.00" height="4.00" fill="#4b8fd4" /><text x="399.5" y="282.1" font-size="7.0" text-anchor="start" fill="#595959" textLength="23.0" lengthAdjust="spacingAndGlyphs">EBITDA</text><rect x="484.20" y="68.40" width="493.60" height="222.00" fill="#fff" stroke="#e3e3e3" stroke-width="0.9"/><text x="732.5" y="86.2" font-size="11.3" text-anchor="middle" fill="#595959" textLength="111.0" lengthAdjust="spacingAndGlyphs">Cash Flow 2025 - 2026</text><rect x="525.00" y="100.12" width="446.50" height="0.80" fill="#e9e9e9" /><text x="517.5" y="103.0" font-size="7.0" text-anchor="end" fill="#595959">600,000</text><rect x="525.00" y="121.75" width="446.50" height="0.80" fill="#e9e9e9" /><text x="517.5" y="124.7" font-size="7.0" text-anchor="end" fill="#595959">500,000</text><rect x="525.00" y="143.38" width="446.50" height="0.80" fill="#e9e9e9" /><text x="517.5" y="146.3" font-size="7.0" text-anchor="end" fill="#595959">400,000</text><rect x="525.00" y="165.01" width="446.50" height="0.80" fill="#e9e9e9" /><text x="517.5" y="167.9" font-size="7.0" text-anchor="end" fill="#595959">300,000</text><rect x="525.00" y="186.64" width="446.50" height="0.80" fill="#e9e9e9" /><text x="517.5" y="189.5" font-size="7.0" text-anchor="end" fill="#595959">200,000</text><rect x="525.00" y="208.27" width="446.50" height="0.80" fill="#e9e9e9" /><text x="517.5" y="211.2" font-size="7.0" text-anchor="end" fill="#595959">100,000</text><rect x="525.00" y="229.90" width="446.50" height="0.80" fill="#e9e9e9" /><text x="517.5" y="232.8" font-size="7.0" text-anchor="end" fill="#595959">0</text><rect x="525.00" y="251.53" width="446.50" height="0.80" fill="#e9e9e9" /><text x="517.5" y="254.4" font-size="7.0" text-anchor="end" fill="#595959">-100,000</text><rect x="529.50" y="161.10" width="7.20" height="30.40" fill="#a5a5a5" /><rect x="529.50" y="191.50" width="7.20" height="38.80" fill="#3a6cc4" /><rect x="529.50" y="230.30" width="7.20" height="9.00" fill="#ed7d31" /><text x="533.1" y="265.2" font-size="7.0" text-anchor="middle" fill="#595959">Jan</text><rect x="548.22" y="160.10" width="7.20" height="30.60" fill="#a5a5a5" /><rect x="548.22" y="190.70" width="7.20" height="39.60" fill="#3a6cc4" /><rect x="548.22" y="230.30" width="7.20" height="9.00" fill="#ed7d31" /><text x="551.8" y="265.2" font-size="7.0" text-anchor="middle" fill="#595959">Feb</text><rect x="566.94" y="158.60" width="7.20" height="31.60" fill="#a5a5a5" /><rect x="566.94" y="190.20" width="7.20" height="40.10" fill="#3a6cc4" /><rect x="566.94" y="230.30" width="7.20" height="9.00" fill="#ed7d31" /><text x="570.5" y="265.2" font-size="7.0" text-anchor="middle" fill="#595959">Mar</text><rect x="585.66" y="156.80" width="7.20" height="32.20" fill="#a5a5a5" /><rect x="585.66" y="189.00" width="7.20" height="41.30" fill="#3a6cc4" /><rect x="585.66" y="230.30" width="7.20" height="9.00" fill="#ed7d31" /><text x="589.3" y="265.2" font-size="7.0" text-anchor="middle" fill="#595959">Apr</text><rect x="604.38" y="154.00" width="7.20" height="33.20" fill="#a5a5a5" /><rect x="604.38" y="187.20" width="7.20" height="43.10" fill="#3a6cc4" /><rect x="604.38" y="230.30" width="7.20" height="9.00" fill="#ed7d31" /><text x="608.0" y="265.2" font-size="7.0" text-anchor="middle" fill="#595959">May</text><rect x="623.10" y="151.80" width="7.20" height="34.60" fill="#a5a5a5" /><rect x="623.10" y="186.40" width="7.20" height="43.90" fill="#3a6cc4" /><rect x="623.10" y="230.30" width="7.20" height="9.00" fill="#ed7d31" /><text x="626.7" y="265.2" font-size="7.0" text-anchor="middle" fill="#595959">Jun</text><rect x="641.82" y="150.30" width="7.20" height="34.90" fill="#a5a5a5" /><rect x="641.82" y="185.20" width="7.20" height="45.10" fill="#3a6cc4" /><rect x="641.82" y="230.30" width="7.20" height="9.00" fill="#ed7d31" /><text x="645.4" y="265.2" font-size="7.0" text-anchor="middle" fill="#595959">Jul</text><rect x="660.54" y="148.20" width="7.20" height="35.70" fill="#a5a5a5" /><rect x="660.54" y="183.90" width="7.20" height="46.40" fill="#3a6cc4" /><rect x="660.54" y="230.30" width="7.20" height="9.00" fill="#ed7d31" /><text x="664.1" y="265.2" font-size="7.0" text-anchor="middle" fill="#595959">Aug</text><rect x="679.26" y="146.00" width="7.20" height="37.10" fill="#a5a5a5" /><rect x="679.26" y="183.10" width="7.20" height="47.20" fill="#3a6cc4" /><rect x="679.26" y="230.30" width="7.20" height="9.00" fill="#ed7d31" /><text x="682.9" y="265.2" font-size="7.0" text-anchor="middle" fill="#595959">Sep</text><rect x="697.98" y="141.90" width="7.20" height="38.80" fill="#a5a5a5" /><rect x="697.98" y="180.70" width="7.20" height="49.60" fill="#3a6cc4" /><rect x="697.98" y="230.30" width="7.20" height="9.60" fill="#ed7d31" /><text x="701.6" y="265.2" font-size="7.0" text-anchor="middle" fill="#595959">Oct</text><rect x="716.70" y="139.80" width="7.20" height="40.10" fill="#a5a5a5" /><rect x="716.70" y="179.90" width="7.20" height="50.40" fill="#3a6cc4" /><rect x="716.70" y="230.30" width="7.20" height="10.30" fill="#ed7d31" /><text x="720.3" y="265.2" font-size="7.0" text-anchor="middle" fill="#595959">Nov</text><rect x="735.42" y="144.50" width="7.20" height="37.50" fill="#a5a5a5" /><rect x="735.42" y="182.00" width="7.20" height="48.30" fill="#3a6cc4" /><rect x="735.42" y="230.30" width="7.20" height="9.60" fill="#ed7d31" /><text x="739.0" y="265.2" font-size="7.0" text-anchor="middle" fill="#595959">Dec</text><rect x="754.14" y="131.40" width="7.20" height="44.50" fill="#a5a5a5" /><rect x="754.14" y="175.90" width="7.20" height="54.40" fill="#3a6cc4" /><rect x="754.14" y="230.30" width="7.20" height="10.60" fill="#ed7d31" /><text x="757.7" y="265.2" font-size="7.0" text-anchor="middle" fill="#595959">Jan</text><rect x="772.86" y="130.40" width="7.20" height="44.80" fill="#a5a5a5" /><rect x="772.86" y="175.20" width="7.20" height="55.10" fill="#3a6cc4" /><rect x="772.86" y="230.30" width="7.20" height="10.60" fill="#ed7d31" /><text x="776.5" y="265.2" font-size="7.0" text-anchor="middle" fill="#595959">Feb</text><rect x="791.58" y="129.00" width="7.20" height="45.20" fill="#a5a5a5" /><rect x="791.58" y="174.20" width="7.20" height="56.10" fill="#3a6cc4" /><rect x="791.58" y="230.30" width="7.20" height="10.60" fill="#ed7d31" /><text x="795.2" y="265.2" font-size="7.0" text-anchor="middle" fill="#595959">Mar</text><rect x="810.30" y="128.00" width="7.20" height="45.20" fill="#a5a5a5" /><rect x="810.30" y="173.20" width="7.20" height="57.10" fill="#3a6cc4" /><rect x="810.30" y="230.30" width="7.20" height="10.20" fill="#ed7d31" /><text x="813.9" y="265.2" font-size="7.0" text-anchor="middle" fill="#595959">Apr</text><rect x="829.02" y="128.40" width="7.20" height="45.50" fill="#a5a5a5" /><rect x="829.02" y="173.90" width="7.20" height="56.40" fill="#3a6cc4" /><rect x="829.02" y="230.30" width="7.20" height="10.60" fill="#ed7d31" /><text x="832.6" y="265.2" font-size="7.0" text-anchor="middle" fill="#595959">May</text><rect x="847.74" y="127.40" width="7.20" height="45.80" fill="#a5a5a5" /><rect x="847.74" y="173.20" width="7.20" height="57.10" fill="#3a6cc4" /><rect x="847.74" y="230.30" width="7.20" height="10.20" fill="#ed7d31" /><text x="851.3" y="265.2" font-size="7.0" text-anchor="middle" fill="#595959">Jun</text><rect x="866.46" y="125.00" width="7.20" height="46.80" fill="#a5a5a5" /><rect x="866.46" y="171.80" width="7.20" height="58.50" fill="#3a6cc4" /><rect x="866.46" y="230.30" width="7.20" height="11.30" fill="#ed7d31" /><text x="870.1" y="265.2" font-size="7.0" text-anchor="middle" fill="#595959">Jul</text><rect x="885.18" y="126.00" width="7.20" height="46.50" fill="#a5a5a5" /><rect x="885.18" y="172.50" width="7.20" height="57.80" fill="#3a6cc4" /><rect x="885.18" y="230.30" width="7.20" height="10.30" fill="#ed7d31" /><text x="888.8" y="265.2" font-size="7.0" text-anchor="middle" fill="#595959">Aug</text><rect x="903.90" y="122.60" width="7.20" height="48.20" fill="#a5a5a5" /><rect x="903.90" y="170.80" width="7.20" height="59.50" fill="#3a6cc4" /><rect x="903.90" y="230.30" width="7.20" height="11.30" fill="#ed7d31" /><text x="907.5" y="265.2" font-size="7.0" text-anchor="middle" fill="#595959">Sep</text><rect x="922.62" y="122.30" width="7.20" height="48.50" fill="#a5a5a5" /><rect x="922.62" y="170.80" width="7.20" height="59.50" fill="#3a6cc4" /><rect x="922.62" y="230.30" width="7.20" height="11.30" fill="#ed7d31" /><text x="926.2" y="265.2" font-size="7.0" text-anchor="middle" fill="#595959">Oct</text><rect x="941.34" y="124.30" width="7.20" height="47.50" fill="#a5a5a5" /><rect x="941.34" y="171.80" width="7.20" height="58.50" fill="#3a6cc4" /><rect x="941.34" y="230.30" width="7.20" height="10.30" fill="#ed7d31" /><text x="944.9" y="265.2" font-size="7.0" text-anchor="middle" fill="#595959">Nov</text><rect x="960.06" y="124.30" width="7.20" height="46.90" fill="#a5a5a5" /><rect x="960.06" y="171.20" width="7.20" height="59.10" fill="#3a6cc4" /><rect x="960.06" y="230.30" width="7.20" height="10.60" fill="#ed7d31" /><text x="963.7" y="265.2" font-size="7.0" text-anchor="middle" fill="#595959">Dec</text><rect x="525.00" y="229.85" width="446.50" height="0.90" fill="#dcdcdc" /><rect x="661.50" y="277.60" width="4.00" height="4.00" fill="#3a6cc4" /><text x="668.0" y="282.1" font-size="7.0" text-anchor="start" fill="#595959" textLength="32.5" lengthAdjust="spacingAndGlyphs">Cash Inflow</text><rect x="714.50" y="277.60" width="4.00" height="4.00" fill="#ed7d31" /><text x="721.5" y="282.1" font-size="7.0" text-anchor="start" fill="#595959" textLength="37.0" lengthAdjust="spacingAndGlyphs">Cash Outflow</text><rect x="770.50" y="277.60" width="4.00" height="4.00" fill="#a5a5a5" /><text x="777.5" y="282.1" font-size="7.0" text-anchor="start" fill="#595959" textLength="28.0" lengthAdjust="spacingAndGlyphs">Net Cash</text><rect x="22.60" y="292.90" width="955.20" height="237.30" fill="#fff" stroke="#e3e3e3" stroke-width="0.9"/><text x="502.5" y="311.2" font-size="11.3" text-anchor="middle" fill="#595959" textLength="141.0" lengthAdjust="spacingAndGlyphs">Key KPI's 5 Years 2025 - 2029</text><rect x="63.70" y="323.80" width="908.00" height="0.80" fill="#e9e9e9" /><text x="56.3" y="326.7" font-size="7.0" text-anchor="end" fill="#595959">800,000</text><rect x="63.70" y="340.35" width="908.00" height="0.80" fill="#e9e9e9" /><text x="56.3" y="343.2" font-size="7.0" text-anchor="end" fill="#595959">700,000</text><rect x="63.70" y="356.90" width="908.00" height="0.80" fill="#e9e9e9" /><text x="56.3" y="359.8" font-size="7.0" text-anchor="end" fill="#595959">600,000</text><rect x="63.70" y="373.45" width="908.00" height="0.80" fill="#e9e9e9" /><text x="56.3" y="376.4" font-size="7.0" text-anchor="end" fill="#595959">500,000</text><rect x="63.70" y="390.00" width="908.00" height="0.80" fill="#e9e9e9" /><text x="56.3" y="392.9" font-size="7.0" text-anchor="end" fill="#595959">400,000</text><rect x="63.70" y="406.55" width="908.00" height="0.80" fill="#e9e9e9" /><text x="56.3" y="409.5" font-size="7.0" text-anchor="end" fill="#595959">300,000</text><rect x="63.70" y="423.10" width="908.00" height="0.80" fill="#e9e9e9" /><text x="56.3" y="426.0" font-size="7.0" text-anchor="end" fill="#595959">200,000</text><rect x="63.70" y="439.65" width="908.00" height="0.80" fill="#e9e9e9" /><text x="56.3" y="442.6" font-size="7.0" text-anchor="end" fill="#595959">100,000</text><rect x="63.70" y="456.20" width="908.00" height="0.80" fill="#e9e9e9" /><text x="56.3" y="459.1" font-size="7.0" text-anchor="end" fill="#595959">0</text><rect x="63.70" y="472.75" width="908.00" height="0.80" fill="#e9e9e9" /><text x="56.3" y="475.7" font-size="7.0" text-anchor="end" fill="#595959">-100,000</text><rect x="63.70" y="489.30" width="908.00" height="0.80" fill="#e9e9e9" /><text x="56.3" y="492.2" font-size="7.0" text-anchor="end" fill="#595959">-200,000</text><rect x="68.85" y="403.16" width="4.70" height="24.28" fill="#4b8fd4" /><rect x="68.85" y="427.44" width="4.70" height="29.16" fill="#3a6cc4" /><rect x="68.85" y="456.60" width="4.70" height="5.20" fill="#ed7d31" /><rect x="68.85" y="461.80" width="4.70" height="0.40" fill="#a5a5a5" /><rect x="68.85" y="462.20" width="4.70" height="1.00" fill="#ffc000" /><text x="71.2" y="501.7" font-size="7.0" text-anchor="middle" fill="#595959">Jan</text><rect x="84.02" y="402.40" width="4.70" height="24.13" fill="#4b8fd4" /><rect x="84.02" y="426.52" width="4.70" height="30.08" fill="#3a6cc4" /><rect x="84.02" y="456.60" width="4.70" height="5.20" fill="#ed7d31" /><rect x="84.02" y="461.80" width="4.70" height="0.40" fill="#a5a5a5" /><rect x="84.02" y="462.20" width="4.70" height="1.00" fill="#ffc000" /><text x="86.4" y="501.7" font-size="7.0" text-anchor="middle" fill="#595959">Feb</text><rect x="99.18" y="401.25" width="4.70" height="25.27" fill="#4b8fd4" /><rect x="99.18" y="426.52" width="4.70" height="30.08" fill="#3a6cc4" /><rect x="99.18" y="456.60" width="4.70" height="5.20" fill="#ed7d31" /><rect x="99.18" y="461.80" width="4.70" height="0.40" fill="#a5a5a5" /><rect x="99.18" y="462.20" width="4.70" height="1.00" fill="#ffc000" /><text x="101.5" y="501.7" font-size="7.0" text-anchor="middle" fill="#595959">Mar</text><rect x="114.35" y="400.10" width="4.70" height="25.81" fill="#4b8fd4" /><rect x="114.35" y="425.91" width="4.70" height="30.69" fill="#3a6cc4" /><rect x="114.35" y="456.60" width="4.70" height="5.20" fill="#ed7d31" /><rect x="114.35" y="461.80" width="4.70" height="0.40" fill="#a5a5a5" /><rect x="114.35" y="462.20" width="4.70" height="1.00" fill="#ffc000" /><text x="116.7" y="501.7" font-size="7.0" text-anchor="middle" fill="#595959">Apr</text><rect x="129.51" y="397.58" width="4.70" height="26.96" fill="#4b8fd4" /><rect x="129.51" y="424.53" width="4.70" height="32.07" fill="#3a6cc4" /><rect x="129.51" y="456.60" width="4.70" height="5.20" fill="#ed7d31" /><rect x="129.51" y="461.80" width="4.70" height="0.40" fill="#a5a5a5" /><rect x="129.51" y="462.20" width="4.70" height="1.00" fill="#ffc000" /><text x="131.9" y="501.7" font-size="7.0" text-anchor="middle" fill="#595959">May</text><rect x="144.68" y="395.44" width="4.70" height="27.95" fill="#4b8fd4" /><rect x="144.68" y="423.39" width="4.70" height="33.21" fill="#3a6cc4" /><rect x="144.68" y="456.60" width="4.70" height="5.20" fill="#ed7d31" /><rect x="144.68" y="461.80" width="4.70" height="0.40" fill="#a5a5a5" /><rect x="144.68" y="462.20" width="4.70" height="1.00" fill="#ffc000" /><text x="147.0" y="501.7" font-size="7.0" text-anchor="middle" fill="#595959">Jun</text><rect x="159.84" y="394.13" width="4.70" height="28.49" fill="#4b8fd4" /><rect x="159.84" y="422.62" width="4.70" height="33.98" fill="#3a6cc4" /><rect x="159.84" y="456.60" width="4.70" height="5.20" fill="#ed7d31" /><rect x="159.84" y="461.80" width="4.70" height="0.40" fill="#a5a5a5" /><rect x="159.84" y="462.20" width="4.70" height="1.00" fill="#ffc000" /><text x="162.2" y="501.7" font-size="7.0" text-anchor="middle" fill="#595959">Jul</text><rect x="175.01" y="392.53" width="4.70" height="28.95" fill="#4b8fd4" /><rect x="175.01" y="421.47" width="4.70" height="35.13" fill="#3a6cc4" /><rect x="175.01" y="456.60" width="4.70" height="5.20" fill="#ed7d31" /><rect x="175.01" y="461.80" width="4.70" height="0.40" fill="#a5a5a5" /><rect x="175.01" y="462.20" width="4.70" height="1.00" fill="#ffc000" /><text x="177.4" y="501.7" font-size="7.0" text-anchor="middle" fill="#595959">Aug</text><rect x="190.17" y="390.39" width="4.70" height="30.71" fill="#4b8fd4" /><rect x="190.17" y="421.09" width="4.70" height="35.51" fill="#3a6cc4" /><rect x="190.17" y="456.60" width="4.70" height="5.20" fill="#ed7d31" /><rect x="190.17" y="461.80" width="4.70" height="0.40" fill="#a5a5a5" /><rect x="190.17" y="462.20" width="4.70" height="1.00" fill="#ffc000" /><text x="192.5" y="501.7" font-size="7.0" text-anchor="middle" fill="#595959">Sep</text><rect x="205.34" y="386.94" width="4.70" height="32.24" fill="#4b8fd4" /><rect x="205.34" y="419.18" width="4.70" height="37.42" fill="#3a6cc4" /><rect x="205.34" y="456.60" width="4.70" height="5.20" fill="#ed7d31" /><rect x="205.34" y="461.80" width="4.70" height="0.40" fill="#a5a5a5" /><rect x="205.34" y="462.20" width="4.70" height="1.00" fill="#ffc000" /><text x="207.7" y="501.7" font-size="7.0" text-anchor="middle" fill="#595959">Oct</text><rect x="220.50" y="385.18" width="4.70" height="33.23" fill="#4b8fd4" /><rect x="220.50" y="418.41" width="4.70" height="38.19" fill="#3a6cc4" /><rect x="220.50" y="456.60" width="4.70" height="5.20" fill="#ed7d31" /><rect x="220.50" y="461.80" width="4.70" height="0.40" fill="#a5a5a5" /><rect x="220.50" y="462.20" width="4.70" height="1.00" fill="#ffc000" /><text x="222.9" y="501.7" font-size="7.0" text-anchor="middle" fill="#595959">Nov</text><rect x="235.67" y="388.86" width="4.70" height="31.09" fill="#4b8fd4" /><rect x="235.67" y="419.94" width="4.70" height="36.66" fill="#3a6cc4" /><rect x="235.67" y="456.60" width="4.70" height="5.20" fill="#ed7d31" /><rect x="235.67" y="461.80" width="4.70" height="0.40" fill="#a5a5a5" /><rect x="235.67" y="462.20" width="4.70" height="1.00" fill="#ffc000" /><text x="238.0" y="501.7" font-size="7.0" text-anchor="middle" fill="#595959">Dec</text><rect x="250.83" y="380.28" width="4.70" height="35.00" fill="#4b8fd4" /><rect x="250.83" y="415.28" width="4.70" height="41.32" fill="#3a6cc4" /><rect x="250.83" y="456.60" width="4.70" height="6.50" fill="#ed7d31" /><rect x="250.83" y="463.10" width="4.70" height="0.40" fill="#a5a5a5" /><rect x="250.83" y="463.50" width="4.70" height="1.00" fill="#ffc000" /><text x="253.2" y="501.7" font-size="7.0" text-anchor="middle" fill="#595959">Jan</text><rect x="266.00" y="379.29" width="4.70" height="35.46" fill="#4b8fd4" /><rect x="266.00" y="414.74" width="4.70" height="41.86" fill="#3a6cc4" /><rect x="266.00" y="456.60" width="4.70" height="6.50" fill="#ed7d31" /><rect x="266.00" y="463.10" width="4.70" height="0.40" fill="#a5a5a5" /><rect x="266.00" y="463.50" width="4.70" height="1.00" fill="#ffc000" /><text x="268.3" y="501.7" font-size="7.0" text-anchor="middle" fill="#595959">Feb</text><rect x="281.16" y="378.37" width="4.70" height="35.76" fill="#4b8fd4" /><rect x="281.16" y="414.13" width="4.70" height="42.47" fill="#3a6cc4" /><rect x="281.16" y="456.60" width="4.70" height="6.50" fill="#ed7d31" /><rect x="281.16" y="463.10" width="4.70" height="0.40" fill="#a5a5a5" /><rect x="281.16" y="463.50" width="4.70" height="1.00" fill="#ffc000" /><text x="283.5" y="501.7" font-size="7.0" text-anchor="middle" fill="#595959">Mar</text><rect x="296.33" y="377.14" width="4.70" height="36.60" fill="#4b8fd4" /><rect x="296.33" y="413.75" width="4.70" height="42.85" fill="#3a6cc4" /><rect x="296.33" y="456.60" width="4.70" height="6.50" fill="#ed7d31" /><rect x="296.33" y="463.10" width="4.70" height="0.40" fill="#a5a5a5" /><rect x="296.33" y="463.50" width="4.70" height="1.00" fill="#ffc000" /><text x="298.7" y="501.7" font-size="7.0" text-anchor="middle" fill="#595959">Apr</text><rect x="311.49" y="378.14" width="4.70" height="35.99" fill="#4b8fd4" /><rect x="311.49" y="414.13" width="4.70" height="42.47" fill="#3a6cc4" /><rect x="311.49" y="456.60" width="4.70" height="6.50" fill="#ed7d31" /><rect x="311.49" y="463.10" width="4.70" height="0.40" fill="#a5a5a5" /><rect x="311.49" y="463.50" width="4.70" height="1.00" fill="#ffc000" /><text x="313.8" y="501.7" font-size="7.0" text-anchor="middle" fill="#595959">May</text><rect x="326.66" y="376.99" width="4.70" height="36.53" fill="#4b8fd4" /><rect x="326.66" y="413.52" width="4.70" height="43.08" fill="#3a6cc4" /><rect x="326.66" y="456.60" width="4.70" height="6.50" fill="#ed7d31" /><rect x="326.66" y="463.10" width="4.70" height="0.40" fill="#a5a5a5" /><rect x="326.66" y="463.50" width="4.70" height="1.00" fill="#ffc000" /><text x="329.0" y="501.7" font-size="7.0" text-anchor="middle" fill="#595959">Jun</text><rect x="341.82" y="374.85" width="4.70" height="37.75" fill="#4b8fd4" /><rect x="341.82" y="412.60" width="4.70" height="44.00" fill="#3a6cc4" /><rect x="341.82" y="456.60" width="4.70" height="6.50" fill="#ed7d31" /><rect x="341.82" y="463.10" width="4.70" height="0.40" fill="#a5a5a5" /><rect x="341.82" y="463.50" width="4.70" height="1.00" fill="#ffc000" /><text x="344.2" y="501.7" font-size="7.0" text-anchor="middle" fill="#595959">Jul</text><rect x="356.99" y="376.22" width="4.70" height="36.76" fill="#4b8fd4" /><rect x="356.99" y="412.98" width="4.70" height="43.62" fill="#3a6cc4" /><rect x="356.99" y="456.60" width="4.70" height="6.50" fill="#ed7d31" /><rect x="356.99" y="463.10" width="4.70" height="0.40" fill="#a5a5a5" /><rect x="356.99" y="463.50" width="4.70" height="1.00" fill="#ffc000" /><text x="359.3" y="501.7" font-size="7.0" text-anchor="middle" fill="#595959">Aug</text><rect x="372.15" y="372.93" width="4.70" height="38.29" fill="#4b8fd4" /><rect x="372.15" y="411.22" width="4.70" height="45.38" fill="#3a6cc4" /><rect x="372.15" y="456.60" width="4.70" height="6.50" fill="#ed7d31" /><rect x="372.15" y="463.10" width="4.70" height="0.40" fill="#a5a5a5" /><rect x="372.15" y="463.50" width="4.70" height="1.00" fill="#ffc000" /><text x="374.5" y="501.7" font-size="7.0" text-anchor="middle" fill="#595959">Sep</text><rect x="387.32" y="372.70" width="4.70" height="38.52" fill="#4b8fd4" /><rect x="387.32" y="411.22" width="4.70" height="45.38" fill="#3a6cc4" /><rect x="387.32" y="456.60" width="4.70" height="6.50" fill="#ed7d31" /><rect x="387.32" y="463.10" width="4.70" height="0.40" fill="#a5a5a5" /><rect x="387.32" y="463.50" width="4.70" height="1.00" fill="#ffc000" /><text x="389.7" y="501.7" font-size="7.0" text-anchor="middle" fill="#595959">Oct</text><rect x="402.48" y="374.46" width="4.70" height="37.90" fill="#4b8fd4" /><rect x="402.48" y="412.37" width="4.70" height="44.23" fill="#3a6cc4" /><rect x="402.48" y="456.60" width="4.70" height="6.50" fill="#ed7d31" /><rect x="402.48" y="463.10" width="4.70" height="0.40" fill="#a5a5a5" /><rect x="402.48" y="463.50" width="4.70" height="1.00" fill="#ffc000" /><text x="404.8" y="501.7" font-size="7.0" text-anchor="middle" fill="#595959">Nov</text><rect x="417.65" y="374.08" width="4.70" height="37.75" fill="#4b8fd4" /><rect x="417.65" y="411.83" width="4.70" height="44.77" fill="#3a6cc4" /><rect x="417.65" y="456.60" width="4.70" height="6.50" fill="#ed7d31" /><rect x="417.65" y="463.10" width="4.70" height="0.40" fill="#a5a5a5" /><rect x="417.65" y="463.50" width="4.70" height="1.00" fill="#ffc000" /><text x="420.0" y="501.7" font-size="7.0" text-anchor="middle" fill="#595959">Dec</text><rect x="432.81" y="346.90" width="4.70" height="51.00" fill="#4b8fd4" /><rect x="432.81" y="397.90" width="4.70" height="58.70" fill="#3a6cc4" /><rect x="432.81" y="456.60" width="4.70" height="8.00" fill="#ed7d31" /><rect x="432.81" y="464.60" width="4.70" height="0.40" fill="#a5a5a5" /><rect x="432.81" y="465.00" width="4.70" height="1.00" fill="#ffc000" /><text x="435.2" y="501.7" font-size="7.0" text-anchor="middle" fill="#595959">Jan</text><rect x="447.98" y="345.40" width="4.70" height="51.60" fill="#4b8fd4" /><rect x="447.98" y="397.00" width="4.70" height="59.60" fill="#3a6cc4" /><rect x="447.98" y="456.60" width="4.70" height="8.00" fill="#ed7d31" /><rect x="447.98" y="464.60" width="4.70" height="0.40" fill="#a5a5a5" /><rect x="447.98" y="465.00" width="4.70" height="1.00" fill="#ffc000" /><text x="450.3" y="501.7" font-size="7.0" text-anchor="middle" fill="#595959">Feb</text><rect x="463.14" y="352.90" width="4.70" height="46.50" fill="#4b8fd4" /><rect x="463.14" y="399.40" width="4.70" height="57.20" fill="#3a6cc4" /><rect x="463.14" y="456.60" width="4.70" height="8.00" fill="#ed7d31" /><rect x="463.14" y="464.60" width="4.70" height="0.40" fill="#a5a5a5" /><rect x="463.14" y="465.00" width="4.70" height="1.00" fill="#ffc000" /><text x="465.5" y="501.7" font-size="7.0" text-anchor="middle" fill="#595959">Mar</text><rect x="478.31" y="349.90" width="4.70" height="48.90" fill="#4b8fd4" /><rect x="478.31" y="398.80" width="4.70" height="57.80" fill="#3a6cc4" /><rect x="478.31" y="456.60" width="4.70" height="8.00" fill="#ed7d31" /><rect x="478.31" y="464.60" width="4.70" height="0.40" fill="#a5a5a5" /><rect x="478.31" y="465.00" width="4.70" height="1.00" fill="#ffc000" /><text x="480.7" y="501.7" font-size="7.0" text-anchor="middle" fill="#595959">Apr</text><rect x="493.47" y="351.10" width="4.70" height="48.00" fill="#4b8fd4" /><rect x="493.47" y="399.10" width="4.70" height="57.50" fill="#3a6cc4" /><rect x="493.47" y="456.60" width="4.70" height="8.00" fill="#ed7d31" /><rect x="493.47" y="464.60" width="4.70" height="0.40" fill="#a5a5a5" /><rect x="493.47" y="465.00" width="4.70" height="1.00" fill="#ffc000" /><text x="495.8" y="501.7" font-size="7.0" text-anchor="middle" fill="#595959">May</text><rect x="508.64" y="350.50" width="4.70" height="48.00" fill="#4b8fd4" /><rect x="508.64" y="398.50" width="4.70" height="58.10" fill="#3a6cc4" /><rect x="508.64" y="456.60" width="4.70" height="8.00" fill="#ed7d31" /><rect x="508.64" y="464.60" width="4.70" height="0.40" fill="#a5a5a5" /><rect x="508.64" y="465.00" width="4.70" height="1.00" fill="#ffc000" /><text x="511.0" y="501.7" font-size="7.0" text-anchor="middle" fill="#595959">Jun</text><rect x="523.80" y="347.20" width="4.70" height="50.40" fill="#4b8fd4" /><rect x="523.80" y="397.60" width="4.70" height="59.00" fill="#3a6cc4" /><rect x="523.80" y="456.60" width="4.70" height="8.00" fill="#ed7d31" /><rect x="523.80" y="464.60" width="4.70" height="0.40" fill="#a5a5a5" /><rect x="523.80" y="465.00" width="4.70" height="1.00" fill="#ffc000" /><text x="526.2" y="501.7" font-size="7.0" text-anchor="middle" fill="#595959">Jul</text><rect x="538.97" y="349.00" width="4.70" height="49.20" fill="#4b8fd4" /><rect x="538.97" y="398.20" width="4.70" height="58.40" fill="#3a6cc4" /><rect x="538.97" y="456.60" width="4.70" height="8.00" fill="#ed7d31" /><rect x="538.97" y="464.60" width="4.70" height="0.40" fill="#a5a5a5" /><rect x="538.97" y="465.00" width="4.70" height="1.00" fill="#ffc000" /><text x="541.3" y="501.7" font-size="7.0" text-anchor="middle" fill="#595959">Aug</text><rect x="554.13" y="344.80" width="4.70" height="51.60" fill="#4b8fd4" /><rect x="554.13" y="396.40" width="4.70" height="60.20" fill="#3a6cc4" /><rect x="554.13" y="456.60" width="4.70" height="8.00" fill="#ed7d31" /><rect x="554.13" y="464.60" width="4.70" height="0.40" fill="#a5a5a5" /><rect x="554.13" y="465.00" width="4.70" height="1.00" fill="#ffc000" /><text x="556.5" y="501.7" font-size="7.0" text-anchor="middle" fill="#595959">Sep</text><rect x="569.30" y="344.20" width="4.70" height="51.90" fill="#4b8fd4" /><rect x="569.30" y="396.10" width="4.70" height="60.50" fill="#3a6cc4" /><rect x="569.30" y="456.60" width="4.70" height="8.00" fill="#ed7d31" /><rect x="569.30" y="464.60" width="4.70" height="0.40" fill="#a5a5a5" /><rect x="569.30" y="465.00" width="4.70" height="1.00" fill="#ffc000" /><text x="571.6" y="501.7" font-size="7.0" text-anchor="middle" fill="#595959">Oct</text><rect x="584.46" y="345.70" width="4.70" height="50.70" fill="#4b8fd4" /><rect x="584.46" y="396.40" width="4.70" height="60.20" fill="#3a6cc4" /><rect x="584.46" y="456.60" width="4.70" height="8.00" fill="#ed7d31" /><rect x="584.46" y="464.60" width="4.70" height="0.40" fill="#a5a5a5" /><rect x="584.46" y="465.00" width="4.70" height="1.00" fill="#ffc000" /><text x="586.8" y="501.7" font-size="7.0" text-anchor="middle" fill="#595959">Nov</text><rect x="599.63" y="345.10" width="4.70" height="51.00" fill="#4b8fd4" /><rect x="599.63" y="396.10" width="4.70" height="60.50" fill="#3a6cc4" /><rect x="599.63" y="456.60" width="4.70" height="8.00" fill="#ed7d31" /><rect x="599.63" y="464.60" width="4.70" height="0.40" fill="#a5a5a5" /><rect x="599.63" y="465.00" width="4.70" height="1.00" fill="#ffc000" /><text x="602.0" y="501.7" font-size="7.0" text-anchor="middle" fill="#595959">Dec</text><rect x="614.79" y="370.90" width="4.70" height="38.10" fill="#4b8fd4" /><rect x="614.79" y="409.00" width="4.70" height="47.60" fill="#3a6cc4" /><rect x="614.79" y="456.60" width="4.70" height="8.00" fill="#ed7d31" /><rect x="614.79" y="464.60" width="4.70" height="0.40" fill="#a5a5a5" /><rect x="614.79" y="465.00" width="4.70" height="1.00" fill="#ffc000" /><text x="617.1" y="501.7" font-size="7.0" text-anchor="middle" fill="#595959">Jan</text><rect x="629.96" y="369.40" width="4.70" height="38.10" fill="#4b8fd4" /><rect x="629.96" y="407.50" width="4.70" height="49.10" fill="#3a6cc4" /><rect x="629.96" y="456.60" width="4.70" height="8.00" fill="#ed7d31" /><rect x="629.96" y="464.60" width="4.70" height="0.40" fill="#a5a5a5" /><rect x="629.96" y="465.00" width="4.70" height="1.00" fill="#ffc000" /><text x="632.3" y="501.7" font-size="7.0" text-anchor="middle" fill="#595959">Feb</text><rect x="645.12" y="368.20" width="4.70" height="39.30" fill="#4b8fd4" /><rect x="645.12" y="407.50" width="4.70" height="49.10" fill="#3a6cc4" /><rect x="645.12" y="456.60" width="4.70" height="8.00" fill="#ed7d31" /><rect x="645.12" y="464.60" width="4.70" height="0.40" fill="#a5a5a5" /><rect x="645.12" y="465.00" width="4.70" height="1.00" fill="#ffc000" /><text x="647.5" y="501.7" font-size="7.0" text-anchor="middle" fill="#595959">Mar</text><rect x="660.29" y="367.60" width="4.70" height="39.30" fill="#4b8fd4" /><rect x="660.29" y="406.90" width="4.70" height="49.70" fill="#3a6cc4" /><rect x="660.29" y="456.60" width="4.70" height="8.00" fill="#ed7d31" /><rect x="660.29" y="464.60" width="4.70" height="0.40" fill="#a5a5a5" /><rect x="660.29" y="465.00" width="4.70" height="1.00" fill="#ffc000" /><text x="662.6" y="501.7" font-size="7.0" text-anchor="middle" fill="#595959">Apr</text><rect x="675.45" y="367.00" width="4.70" height="39.60" fill="#4b8fd4" /><rect x="675.45" y="406.60" width="4.70" height="50.00" fill="#3a6cc4" /><rect x="675.45" y="456.60" width="4.70" height="8.00" fill="#ed7d31" /><rect x="675.45" y="464.60" width="4.70" height="0.40" fill="#a5a5a5" /><rect x="675.45" y="465.00" width="4.70" height="1.00" fill="#ffc000" /><text x="677.8" y="501.7" font-size="7.0" text-anchor="middle" fill="#595959">May</text><rect x="690.62" y="366.70" width="4.70" height="39.90" fill="#4b8fd4" /><rect x="690.62" y="406.60" width="4.70" height="50.00" fill="#3a6cc4" /><rect x="690.62" y="456.60" width="4.70" height="8.00" fill="#ed7d31" /><rect x="690.62" y="464.60" width="4.70" height="0.40" fill="#a5a5a5" /><rect x="690.62" y="465.00" width="4.70" height="1.00" fill="#ffc000" /><text x="693.0" y="501.7" font-size="7.0" text-anchor="middle" fill="#595959">Jun</text><rect x="705.78" y="366.20" width="4.70" height="39.80" fill="#4b8fd4" /><rect x="705.78" y="406.00" width="4.70" height="50.60" fill="#3a6cc4" /><rect x="705.78" y="456.60" width="4.70" height="8.00" fill="#ed7d31" /><rect x="705.78" y="464.60" width="4.70" height="0.40" fill="#a5a5a5" /><rect x="705.78" y="465.00" width="4.70" height="1.00" fill="#ffc000" /><text x="708.1" y="501.7" font-size="7.0" text-anchor="middle" fill="#595959">Jul</text><rect x="720.95" y="364.60" width="4.70" height="40.80" fill="#4b8fd4" /><rect x="720.95" y="405.40" width="4.70" height="51.20" fill="#3a6cc4" /><rect x="720.95" y="456.60" width="4.70" height="8.00" fill="#ed7d31" /><rect x="720.95" y="464.60" width="4.70" height="0.40" fill="#a5a5a5" /><rect x="720.95" y="465.00" width="4.70" height="1.00" fill="#ffc000" /><text x="723.3" y="501.7" font-size="7.0" text-anchor="middle" fill="#595959">Aug</text><rect x="736.11" y="363.40" width="4.70" height="41.70" fill="#4b8fd4" /><rect x="736.11" y="405.10" width="4.70" height="51.50" fill="#3a6cc4" /><rect x="736.11" y="456.60" width="4.70" height="8.00" fill="#ed7d31" /><rect x="736.11" y="464.60" width="4.70" height="0.40" fill="#a5a5a5" /><rect x="736.11" y="465.00" width="4.70" height="1.00" fill="#ffc000" /><text x="738.5" y="501.7" font-size="7.0" text-anchor="middle" fill="#595959">Sep</text><rect x="751.28" y="362.80" width="4.70" height="42.00" fill="#4b8fd4" /><rect x="751.28" y="404.80" width="4.70" height="51.80" fill="#3a6cc4" /><rect x="751.28" y="456.60" width="4.70" height="8.00" fill="#ed7d31" /><rect x="751.28" y="464.60" width="4.70" height="0.40" fill="#a5a5a5" /><rect x="751.28" y="465.00" width="4.70" height="1.00" fill="#ffc000" /><text x="753.6" y="501.7" font-size="7.0" text-anchor="middle" fill="#595959">Oct</text><rect x="766.44" y="361.60" width="4.70" height="42.90" fill="#4b8fd4" /><rect x="766.44" y="404.50" width="4.70" height="52.10" fill="#3a6cc4" /><rect x="766.44" y="456.60" width="4.70" height="8.00" fill="#ed7d31" /><rect x="766.44" y="464.60" width="4.70" height="0.40" fill="#a5a5a5" /><rect x="766.44" y="465.00" width="4.70" height="1.00" fill="#ffc000" /><text x="768.8" y="501.7" font-size="7.0" text-anchor="middle" fill="#595959">Nov</text><rect x="781.61" y="360.70" width="4.70" height="43.50" fill="#4b8fd4" /><rect x="781.61" y="404.20" width="4.70" height="52.40" fill="#3a6cc4" /><rect x="781.61" y="456.60" width="4.70" height="8.00" fill="#ed7d31" /><rect x="781.61" y="464.60" width="4.70" height="0.40" fill="#a5a5a5" /><rect x="781.61" y="465.00" width="4.70" height="1.00" fill="#ffc000" /><text x="784.0" y="501.7" font-size="7.0" text-anchor="middle" fill="#595959">Dec</text><rect x="796.77" y="354.70" width="4.70" height="45.30" fill="#4b8fd4" /><rect x="796.77" y="400.00" width="4.70" height="56.60" fill="#3a6cc4" /><rect x="796.77" y="456.60" width="4.70" height="8.00" fill="#ed7d31" /><rect x="796.77" y="464.60" width="4.70" height="0.40" fill="#a5a5a5" /><rect x="796.77" y="465.00" width="4.70" height="1.00" fill="#ffc000" /><text x="799.1" y="501.7" font-size="7.0" text-anchor="middle" fill="#595959">Jan</text><rect x="811.94" y="353.80" width="4.70" height="46.20" fill="#4b8fd4" /><rect x="811.94" y="400.00" width="4.70" height="56.60" fill="#3a6cc4" /><rect x="811.94" y="456.60" width="4.70" height="8.00" fill="#ed7d31" /><rect x="811.94" y="464.60" width="4.70" height="0.40" fill="#a5a5a5" /><rect x="811.94" y="465.00" width="4.70" height="1.00" fill="#ffc000" /><text x="814.3" y="501.7" font-size="7.0" text-anchor="middle" fill="#595959">Feb</text><rect x="827.10" y="351.40" width="4.70" height="47.70" fill="#4b8fd4" /><rect x="827.10" y="399.10" width="4.70" height="57.50" fill="#3a6cc4" /><rect x="827.10" y="456.60" width="4.70" height="8.00" fill="#ed7d31" /><rect x="827.10" y="464.60" width="4.70" height="0.40" fill="#a5a5a5" /><rect x="827.10" y="465.00" width="4.70" height="1.00" fill="#ffc000" /><text x="829.5" y="501.7" font-size="7.0" text-anchor="middle" fill="#595959">Mar</text><rect x="842.27" y="350.80" width="4.70" height="48.00" fill="#4b8fd4" /><rect x="842.27" y="398.80" width="4.70" height="57.80" fill="#3a6cc4" /><rect x="842.27" y="456.60" width="4.70" height="8.00" fill="#ed7d31" /><rect x="842.27" y="464.60" width="4.70" height="0.40" fill="#a5a5a5" /><rect x="842.27" y="465.00" width="4.70" height="1.00" fill="#ffc000" /><text x="844.6" y="501.7" font-size="7.0" text-anchor="middle" fill="#595959">Apr</text><rect x="857.43" y="350.20" width="4.70" height="48.60" fill="#4b8fd4" /><rect x="857.43" y="398.80" width="4.70" height="57.80" fill="#3a6cc4" /><rect x="857.43" y="456.60" width="4.70" height="8.00" fill="#ed7d31" /><rect x="857.43" y="464.60" width="4.70" height="0.40" fill="#a5a5a5" /><rect x="857.43" y="465.00" width="4.70" height="1.00" fill="#ffc000" /><text x="859.8" y="501.7" font-size="7.0" text-anchor="middle" fill="#595959">May</text><rect x="872.60" y="349.90" width="4.70" height="48.60" fill="#4b8fd4" /><rect x="872.60" y="398.50" width="4.70" height="58.10" fill="#3a6cc4" /><rect x="872.60" y="456.60" width="4.70" height="8.00" fill="#ed7d31" /><rect x="872.60" y="464.60" width="4.70" height="0.40" fill="#a5a5a5" /><rect x="872.60" y="465.00" width="4.70" height="1.00" fill="#ffc000" /><text x="874.9" y="501.7" font-size="7.0" text-anchor="middle" fill="#595959">Jun</text><rect x="887.76" y="348.10" width="4.70" height="49.80" fill="#4b8fd4" /><rect x="887.76" y="397.90" width="4.70" height="58.70" fill="#3a6cc4" /><rect x="887.76" y="456.60" width="4.70" height="8.00" fill="#ed7d31" /><rect x="887.76" y="464.60" width="4.70" height="0.40" fill="#a5a5a5" /><rect x="887.76" y="465.00" width="4.70" height="1.00" fill="#ffc000" /><text x="890.1" y="501.7" font-size="7.0" text-anchor="middle" fill="#595959">Jul</text><rect x="902.93" y="347.20" width="4.70" height="50.40" fill="#4b8fd4" /><rect x="902.93" y="397.60" width="4.70" height="59.00" fill="#3a6cc4" /><rect x="902.93" y="456.60" width="4.70" height="8.00" fill="#ed7d31" /><rect x="902.93" y="464.60" width="4.70" height="0.40" fill="#a5a5a5" /><rect x="902.93" y="465.00" width="4.70" height="1.00" fill="#ffc000" /><text x="905.3" y="501.7" font-size="7.0" text-anchor="middle" fill="#595959">Aug</text><rect x="918.09" y="345.10" width="4.70" height="51.90" fill="#4b8fd4" /><rect x="918.09" y="397.00" width="4.70" height="59.60" fill="#3a6cc4" /><rect x="918.09" y="456.60" width="4.70" height="8.00" fill="#ed7d31" /><rect x="918.09" y="464.60" width="4.70" height="0.40" fill="#a5a5a5" /><rect x="918.09" y="465.00" width="4.70" height="1.00" fill="#ffc000" /><text x="920.4" y="501.7" font-size="7.0" text-anchor="middle" fill="#595959">Sep</text><rect x="933.26" y="344.20" width="4.70" height="51.90" fill="#4b8fd4" /><rect x="933.26" y="396.10" width="4.70" height="60.50" fill="#3a6cc4" /><rect x="933.26" y="456.60" width="4.70" height="8.00" fill="#ed7d31" /><rect x="933.26" y="464.60" width="4.70" height="0.40" fill="#a5a5a5" /><rect x="933.26" y="465.00" width="4.70" height="1.00" fill="#ffc000" /><text x="935.6" y="501.7" font-size="7.0" text-anchor="middle" fill="#595959">Oct</text><rect x="948.42" y="343.60" width="4.70" height="52.20" fill="#4b8fd4" /><rect x="948.42" y="395.80" width="4.70" height="60.80" fill="#3a6cc4" /><rect x="948.42" y="456.60" width="4.70" height="8.00" fill="#ed7d31" /><rect x="948.42" y="464.60" width="4.70" height="0.40" fill="#a5a5a5" /><rect x="948.42" y="465.00" width="4.70" height="1.00" fill="#ffc000" /><text x="950.8" y="501.7" font-size="7.0" text-anchor="middle" fill="#595959">Nov</text><rect x="963.59" y="343.00" width="4.70" height="52.50" fill="#4b8fd4" /><rect x="963.59" y="395.50" width="4.70" height="61.10" fill="#3a6cc4" /><rect x="963.59" y="456.60" width="4.70" height="8.00" fill="#ed7d31" /><rect x="963.59" y="464.60" width="4.70" height="0.40" fill="#a5a5a5" /><rect x="963.59" y="465.00" width="4.70" height="1.00" fill="#ffc000" /><text x="965.9" y="501.7" font-size="7.0" text-anchor="middle" fill="#595959">Dec</text><rect x="63.70" y="456.15" width="908.00" height="0.90" fill="#dcdcdc" /><rect x="334.50" y="515.60" width="4.00" height="4.00" fill="#3a6cc4" /><text x="341.5" y="520.1" font-size="7.0" text-anchor="start" fill="#595959" textLength="28.0" lengthAdjust="spacingAndGlyphs">Revenue</text><rect x="380.50" y="515.60" width="4.00" height="4.00" fill="#ed7d31" /><text x="388.0" y="520.1" font-size="7.0" text-anchor="start" fill="#595959" textLength="36.5" lengthAdjust="spacingAndGlyphs">Total COGS</text><rect x="434.50" y="515.60" width="4.00" height="4.00" fill="#a5a5a5" /><text x="441.5" y="520.1" font-size="7.0" text-anchor="start" fill="#595959" textLength="76.0" lengthAdjust="spacingAndGlyphs">Total Variable Expenses</text><rect x="528.50" y="515.60" width="4.00" height="4.00" fill="#ffc000" /><text x="535.5" y="520.1" font-size="7.0" text-anchor="start" fill="#595959" textLength="97.0" lengthAdjust="spacingAndGlyphs">Total Admin Salary and Wages</text><rect x="643.50" y="515.60" width="4.00" height="4.00" fill="#4b8fd4" /><text x="650.5" y="520.1" font-size="7.0" text-anchor="start" fill="#595959" textLength="23.0" lengthAdjust="spacingAndGlyphs">EBITDA</text><rect x="22.60" y="531.40" width="460.50" height="43.60" fill="#fff" stroke="#e3e3e3" stroke-width="0.9"/><rect x="484.20" y="531.40" width="493.60" height="43.60" fill="#fff" stroke="#e3e3e3" stroke-width="0.9"/><text x="251.5" y="549.3" font-size="11.3" text-anchor="middle" fill="#595959" textLength="104.0" lengthAdjust="spacingAndGlyphs">Key KPI's 2026 - 2027</text><text x="732.5" y="549.3" font-size="11.3" text-anchor="middle" fill="#595959" textLength="111.0" lengthAdjust="spacingAndGlyphs">Cash Flow 2026 - 2027</text></svg>
<div class="b" style="left:987px;top:50px;width:13px;height:509px;background:#f1f1f1;"></div>
<div class="b" style="left:991.2px;top:62.5px;width:5.8px;height:239.5px;background:#707070;border-radius:3px;"></div>
<div class="b" style="left:981.2px;top:64px;width:0.7px;height:495px;background:#eeeeee;"></div>
<div class="b" style="left:984.3px;top:64px;width:0.7px;height:495px;background:#eeeeee;"></div>
<svg class="b" style="left:989px;top:52px" width="10" height="8"><path d="M5 1.5 L8.3 6 L1.7 6 Z" fill="#6b6b6b"/></svg>
<svg class="b" style="left:989px;top:551.2px" width="10" height="8"><path d="M5 6.5 L8.3 2 L1.7 2 Z" fill="#6b6b6b"/></svg>
<div class="b" style="left:0px;top:559px;width:1000px;height:21px;background:#e9ebee;"></div>
<svg class="b" style="left:10px;top:562px" width="40" height="14" fill="none" stroke="#727272" stroke-width="1.05"><path d="M10.3 3.8 L7.5 6.9 L10.3 10"/><path d="M28 3.8 L30.8 6.9 L28 10"/></svg>
<svg class="b" style="left:55px;top:566.2px" width="12" height="6"><circle cx="2.7" cy="3" r="0.95" fill="#333"/><circle cx="5.3" cy="3" r="0.95" fill="#333"/><circle cx="7.9" cy="3" r="0.95" fill="#333"/></svg>
<div class="b" style="left:74px;top:561px;width:70.5px;height:16.6px;background:#fefe9c;border-radius:2px;"></div>
<span class="t" style="left:80.0px;top:565.0px;font-size:10.2px;color:#3a3a3a;transform:scaleX(0.882);">2029 Accounts</span>
<span class="t" style="left:157.0px;top:565.0px;font-size:10.2px;color:#3a3a3a;transform:scaleX(0.862);">2029 MRR Dashboard</span>
<div class="b" style="left:256px;top:561px;width:41.5px;height:16.6px;background:#fefe9c;border-radius:2px;"></div>
<span class="t" style="left:263.0px;top:565.0px;font-size:10.2px;color:#3a3a3a;transform:scaleX(0.825);">IS 2029</span>
<span class="t" style="left:308.5px;top:565.0px;font-size:10.2px;color:#3a3a3a;transform:scaleX(0.831);">CF 2029</span>
<span class="t" style="left:358.0px;top:565.0px;font-size:10.2px;color:#3a3a3a;transform:scaleX(0.818);">BS 2029</span>
<span class="t" style="left:408.0px;top:565.0px;font-size:10.2px;color:#3a3a3a;transform:scaleX(0.882);">Statements Summary 2029</span>
<span class="t" style="left:535.0px;top:565.0px;font-size:10.2px;color:#3a3a3a;transform:scaleX(0.853);">Sales Summary Charts</span>
<div class="b" style="left:636px;top:559px;width:38px;height:19.5px;background:#fff;"></div>
<span class="t" style="left:641.5px;top:562.8px;font-size:10.0px;color:#222;font-weight:bold;transform:scaleX(0.837);">Charts</span>
<div class="b" style="left:641.5px;top:573.8px;width:26.5px;height:1.3px;background:#107c41;"></div>
<span class="t" style="left:684.0px;top:565.0px;font-size:10.2px;color:#3a3a3a;transform:scaleX(0.808);">BEA</span>
<div class="b" style="left:712px;top:561px;width:90px;height:16.6px;background:#fefe9c;border-radius:2px;"></div>
<span class="t" style="left:718.0px;top:565.0px;font-size:10.2px;color:#3a3a3a;transform:scaleX(0.871);">Salary Assumptions</span>
<div class="b" style="left:808px;top:561px;width:72px;height:16.6px;background:#fefe9c;overflow:hidden;border-radius:2px 0 0 2px"></div>
<div class="b" style="left:808px;top:559px;width:72px;height:21px;overflow:hidden">
<span class="t" style="left:6.5px;top:6.0px;font-size:10.2px;color:#3a3a3a;transform:scaleX(0.855)">COGS Assumptions</span>
</div>
<svg class="b" style="left:885px;top:566px" width="12" height="6"><circle cx="2.6" cy="3" r="0.95" fill="#333"/><circle cx="5.2" cy="3" r="0.95" fill="#333"/><circle cx="7.8" cy="3" r="0.95" fill="#333"/></svg>
<span class="t" style="left:907.4px;top:561.7px;font-size:13px;color:#444;transform:scaleX(1.027);">+</span>
<svg class="b" style="left:929px;top:564px" width="6" height="14"><circle cx="3" cy="2.8" r="0.9" fill="#555"/><circle cx="3" cy="6" r="0.9" fill="#555"/><circle cx="3" cy="9.2" r="0.9" fill="#555"/></svg>
<svg class="b" style="left:944px;top:564px" width="44" height="11"><path d="M6.3 2 L6.3 8.6 L2 5.3 Z" fill="#666"/><rect x="9.7" y="2.5" width="20" height="5.5" rx="2.7" fill="#6f6f6f"/><path d="M37 2 L37 8.6 L41.3 5.3 Z" fill="#666"/></svg>
<div class="b" style="left:0px;top:580px;width:1000px;height:13px;background:#f3f3f3;"></div>
<span class="t" style="left:8.0px;top:583.5px;font-size:7.6px;color:#606060;transform:scaleX(0.842);">Ready</span>
<span class="t" style="left:72.0px;top:583.5px;font-size:7.4px;color:#333;font-weight:bold;transform:scaleX(0.888);">Accessibility: Investigate</span>
<svg class="b" style="left:39px;top:582px" width="11" height="11" viewBox="0 0 11 11"><rect x="0.8" y="1" width="8.4" height="8.2" rx="0.8" fill="none" stroke="#5a5a5a" stroke-width="1"/><path d="M0.8 3.4 H9.2 M3.4 3.4 V9 M0.8 6 H4" stroke="#5a5a5a" stroke-width="0.8"/><circle cx="6.6" cy="6.6" r="2.3" fill="#f3f3f3"/><circle cx="6.6" cy="6.6" r="1.5" fill="#333"/></svg>
<svg class="b" style="left:59px;top:581.5px" width="11" height="11" viewBox="0 0 11 11"><circle cx="5.6" cy="2" r="1.2" fill="#555"/><path d="M1.2 3.9 L5.6 4.8 L10 3.9 M5.6 4.8 V6.8 M5.6 6.8 L3.4 10.2 M5.6 6.8 L7.8 10.2" stroke="#555" stroke-width="1.05" fill="none"/><path d="M1.8 5.2 L4 9.5 M9.4 5.2 L7.2 9.5" stroke="#777" stroke-width="0.7" fill="none"/></svg>
<div class="b" style="left:811.5px;top:580.5px;width:16.5px;height:12.5px;background:#dedede;"></div>
<svg class="b" style="left:815.3px;top:582.7px" width="9.5" height="9" viewBox="0 0 9.5 9"><rect x="0.5" y="0.5" width="8.5" height="8" fill="none" stroke="#555" stroke-width="0.9"/><path d="M0.5 3.2 H9 M0.5 5.9 H9 M3.3 0.5 V8.5 M6.2 0.5 V8.5" stroke="#555" stroke-width="0.8"/></svg>
<svg class="b" style="left:841px;top:582.7px" width="9.5" height="9" viewBox="0 0 9.5 9"><rect x="0.5" y="0.5" width="8.5" height="8" fill="none" stroke="#555" stroke-width="0.9"/><path d="M2.7 0.5 V8.5 M4.75 0.5 V8.5 M6.8 0.5 V8.5" stroke="#555" stroke-width="0.8"/></svg>
<svg class="b" style="left:867px;top:582.7px" width="9.5" height="9" viewBox="0 0 9.5 9"><rect x="0.5" y="0.5" width="8.5" height="8" fill="none" stroke="#555" stroke-width="0.9"/><path d="M3.2 0.5 V4.6 H9" stroke="#555" stroke-width="0.9" fill="none"/></svg>
<span class="t" style="left:889.0px;top:582.4px;font-size:8px;color:#555;transform:scaleX(0.856);">−</span>
<div class="b" style="left:896px;top:586.6px;width:66px;height:0.8px;background:#8a8a8a;"></div>
<div class="b" style="left:928.2px;top:583.8px;width:2.7px;height:6.8px;background:#505050;"></div>
<span class="t" style="left:965.0px;top:582.4px;font-size:8px;color:#555;transform:scaleX(0.963);">+</span>
<span class="t" style="left:978.0px;top:582.8px;font-size:7.2px;color:#444;transform:scaleX(0.950);">100%</span>

<svg class="b" style="left:0;top:0" width="1000" height="31" viewBox="0 0 1000 31" fill="none" stroke="#fff" stroke-width="1">
 <!-- excel logo -->
 <rect x="13.5" y="10" width="8" height="11" fill="#e8f1ec" stroke="none"/>
 <path d="M15 12.8 H21.5 M15 15.5 H21.5 M15 18.2 H21.5 M18 10 V21" stroke="#1e7145" stroke-width="0.7"/>
 <rect x="10" y="11.5" width="7" height="8" fill="#fff" stroke="none"/>
 <path d="M11.8 13.3 L15.2 17.7 M15.2 13.3 L11.8 17.7" stroke="#1e7145" stroke-width="1.1"/>
 <!-- save -->
 <path d="M31.5 10.5 H40 L42 12.5 V20.5 H31.5 Z" stroke-width="1"/>
 <path d="M33.5 10.5 V14 H39.5 V10.5 M33.5 20.5 V16.5 H40 V20.5" stroke-width="0.9"/>
 <!-- undo -->
 <path d="M51 10.5 V14.5 H55" stroke-width="1.1"/>
 <path d="M51.3 14.3 C53 11.2 57.2 10.6 59 13.2 C60.6 15.6 59 18.5 55.5 21" stroke-width="1.1"/>
 <path d="M64 15.5 H67.5" stroke-width="1"/>
 <!-- redo dim -->
 <g opacity="0.38"><path d="M84 10.5 V14.5 H80" stroke-width="1.1"/><path d="M83.7 14.3 C82 11.2 77.8 10.6 76 13.2 C74.4 15.6 76 18.5 79.5 21" stroke-width="1.1"/><path d="M88.5 15.5 H92" stroke-width="1"/></g>
 <!-- customize -->
 <path d="M102.5 13.8 H107" stroke-width="0.9"/><path d="M102.3 16 H107.2 L104.75 18.6 Z" fill="#fff" stroke="none"/>
 <!-- search magnifier -->
 <circle cx="400.2" cy="13.6" r="3.1" stroke="#2b6a47" stroke-width="1"/><path d="M397.9 16 L395 19" stroke="#2b6a47" stroke-width="1.1"/>
 <!-- window controls -->
 <path d="M919 15.5 H926" stroke-width="1"/>
 <rect x="950.2" y="13.6" width="5" height="5" rx="1" stroke-width="1"/><path d="M952 13.4 V13 Q952 12 953 12 H956 Q957 12 957 13 V16 Q957 17 956 17 H955.6" stroke-width="1"/>
 <path d="M981.5 12 L988.5 19 M988.5 12 L981.5 19" stroke-width="1"/>
</svg>
<svg class="b" style="left:946px;top:33.5px" width="47" height="15" viewBox="0 0 47 15" fill="none" stroke="#fff" stroke-width="0.9"><path d="M4.5 6.8 V11.5 H10.3 V6.8"/><path d="M7.4 9 V3.4 M5.3 5.4 L7.4 3.3 L9.5 5.4"/><path d="M39.8 6.6 L41.9 8.8 L44 6.6"/></svg>
</body></html>
